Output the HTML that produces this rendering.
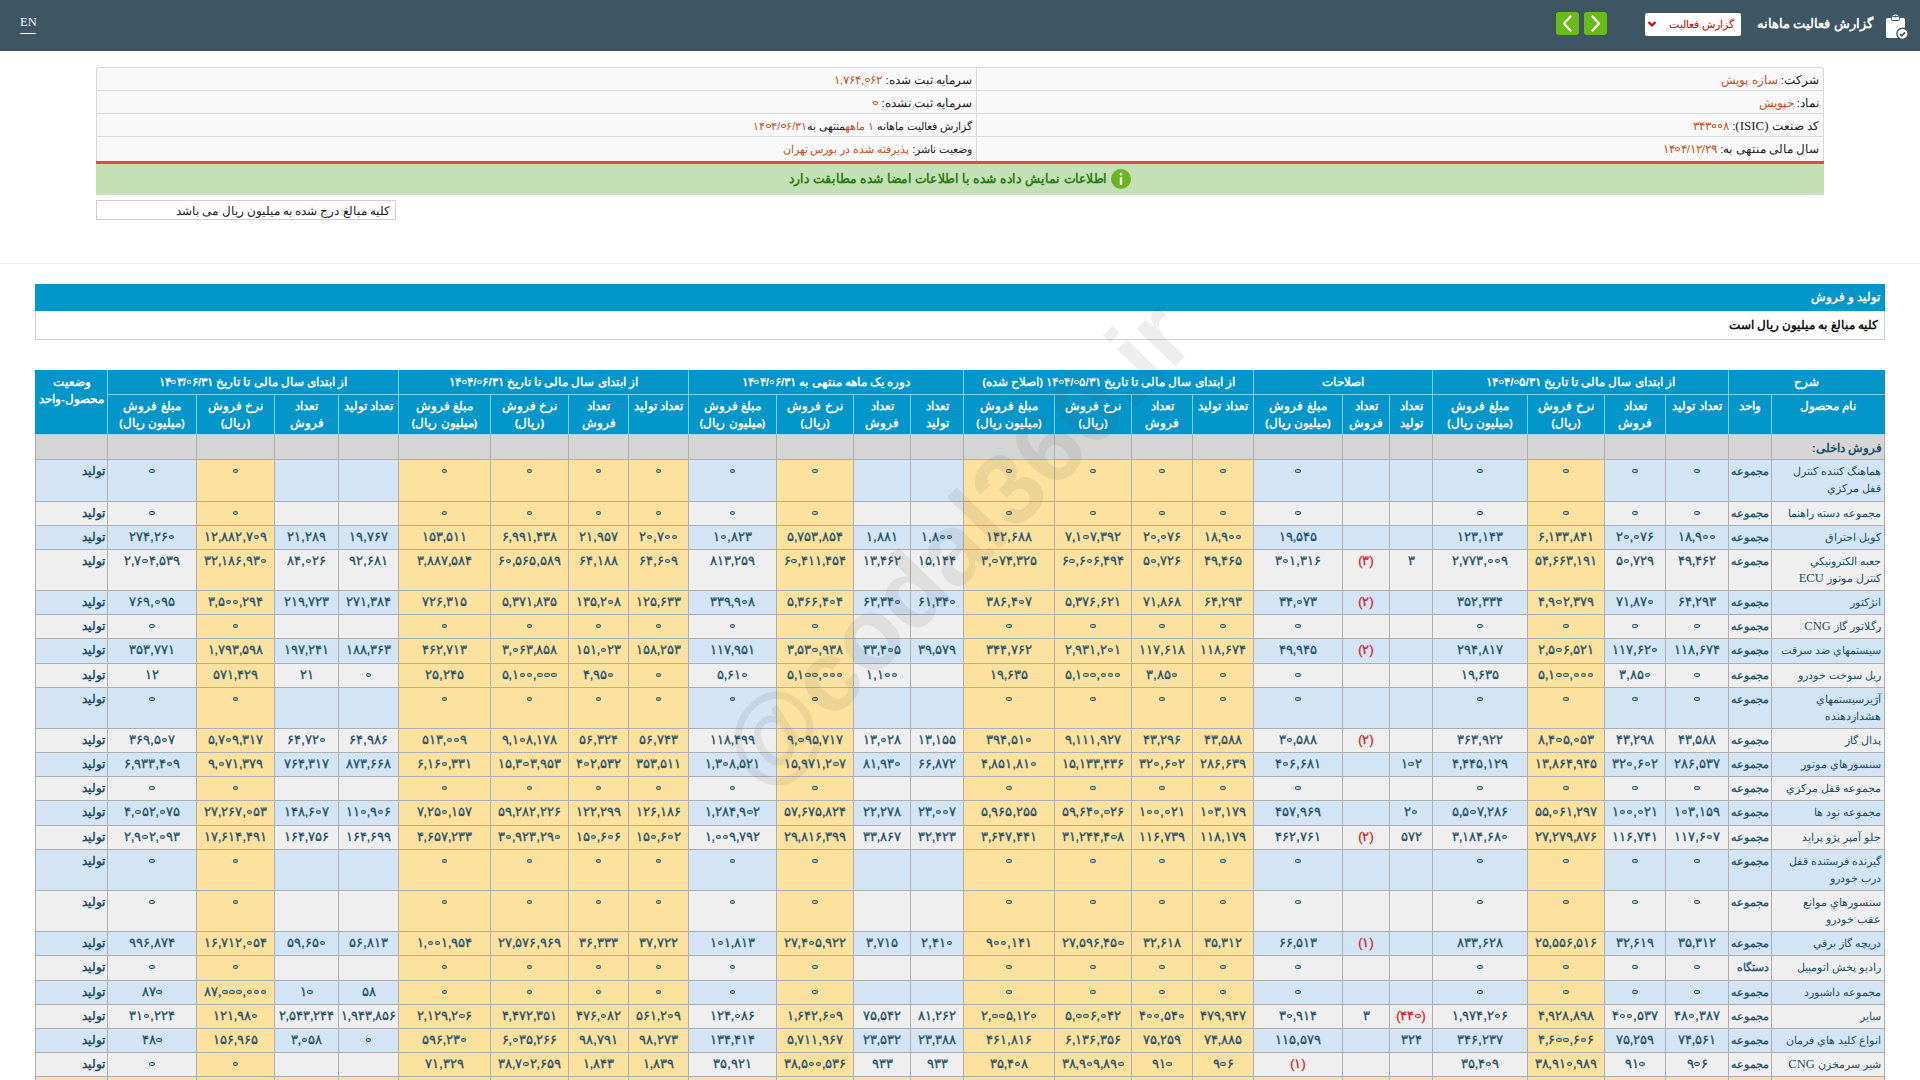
<!DOCTYPE html><html lang="fa"><head><meta charset="utf-8"><title>codal</title><style>
*{box-sizing:border-box;margin:0;padding:0}
html,body{width:1920px;height:1080px;overflow:hidden;background:#fff}
body{font-family:"Liberation Sans",sans-serif;position:relative;color:#222}
.a{position:absolute}
.nav{left:0;top:0;width:1920px;height:51px;background:#3e5563}
.ib{direction:rtl;white-space:nowrap}
.c{position:absolute;overflow:hidden;white-space:nowrap;direction:rtl;font-size:12.5px;color:#1c5068;line-height:22px}
.n{-webkit-text-stroke:0.3px currentColor}
.n{text-align:center}
.h{position:absolute;color:#fff;font-weight:bold;font-size:11.5px;text-align:center;direction:rtl;line-height:17px;overflow:hidden;white-space:nowrap}
.red{color:#d42020;font-weight:normal}
.ser{font-family:"Liberation Serif",serif;font-size:12.5px}
.L{direction:ltr;unicode-bidi:isolate}
.z{position:relative;-webkit-text-fill-color:transparent}
.z::after{content:"";position:absolute;left:50%;top:50%;width:.42em;height:.34em;margin:-.15em 0 0 -.21em;border:.13em solid currentColor;border-radius:50%;box-sizing:border-box}
</style></head><body>

<div class="a nav"></div>
<div class="a" style="left:20px;top:14px;font-family:'Liberation Serif',serif;font-size:12.5px;color:#fff;line-height:16px">EN</div>
<div class="a" style="left:20px;top:33px;width:16px;height:1px;background:#fff"></div>
<svg class="a" style="left:1884px;top:13px" width="26" height="28" viewBox="0 0 26 28">
<path d="M3.5 5H8a3.5 3.5 0 0 1 7 0h4.5a1.5 1.5 0 0 1 1.5 1.5v17a1.5 1.5 0 0 1-1.5 1.5h-16A1.5 1.5 0 0 1 2 23.5v-17A1.5 1.5 0 0 1 3.5 5z" fill="#fff"/>
<rect x="7.5" y="3.5" width="8" height="4" rx="1" fill="#fff" stroke="#3e5563" stroke-width="1"/>
<circle cx="11.5" cy="3.6" r="1" fill="#3e5563"/>
<circle cx="18.5" cy="20.8" r="5.6" fill="#fff" stroke="#3e5563" stroke-width="1.4"/>
<path d="M15.9 21l1.9 1.9 3.3-3.5" fill="none" stroke="#3e5563" stroke-width="1.6"/>
</svg>
<div class="a ib" style="right:47px;top:14px;font-size:13.3px;color:#fff;line-height:20px;font-weight:bold">گزارش فعالیت ماهانه</div>
<div class="a" style="left:1645px;top:13px;width:96px;height:23px;background:#fff;border-radius:2px"></div>
<div class="a ib" style="right:186px;top:15px;font-size:11.2px;color:#e00000;line-height:18px">گزارش فعالیت</div>
<svg class="a" style="left:1647px;top:20px" width="10" height="8" viewBox="0 0 10 8"><path d="M1.5 2l3.5 3.5L8.5 2" fill="none" stroke="#e00000" stroke-width="2.2"/></svg>
<div class="a" style="left:1556px;top:12px;width:23px;height:23px;background:#6bbb18;border-radius:3px"></div>
<svg class="a" style="left:1556px;top:12px" width="23" height="23" viewBox="0 0 23 23"><path d="M14.5 4.5l-6.5 7l6.5 7" fill="none" stroke="#fff" stroke-width="2.2" stroke-linecap="round" stroke-linejoin="round"/></svg>
<div class="a" style="left:1584px;top:12px;width:23px;height:23px;background:#6bbb18;border-radius:3px"></div>
<svg class="a" style="left:1584px;top:12px" width="23" height="23" viewBox="0 0 23 23"><path d="M8.5 4.5l6.5 7l-6.5 7" fill="none" stroke="#fff" stroke-width="2.2" stroke-linecap="round" stroke-linejoin="round"/></svg>
<div class="a" style="left:96px;top:67px;width:1728px;height:95px;background:#f9f9f9;border:1px solid #d9d9d9;border-bottom:none;border-radius:3px 3px 0 0"></div>
<div class="a" style="left:97px;top:90px;width:1726px;height:1px;background:#dcdcdc"></div>
<div class="a" style="left:97px;top:113px;width:1726px;height:1px;background:#dcdcdc"></div>
<div class="a" style="left:97px;top:136px;width:1726px;height:1px;background:#dcdcdc"></div>
<div class="a" style="left:976px;top:68px;width:1px;height:93px;background:#dcdcdc"></div>
<div class="a" style="left:96px;top:161px;width:1728px;height:3px;background:#e5474a"></div>
<div class="a" style="left:96px;top:164px;width:1728px;height:31px;background:#c3e1b5"></div>
<div class="a ib" style="right:101px;top:69px;font-size:11.5px;line-height:22px;color:#222">شرکت: <span style="color:#c4511a">سازه پویش</span></div>
<div class="a ib" style="right:101px;top:92px;font-size:11.5px;line-height:22px;color:#222">نماد: <span style="color:#c4511a">خپویش</span></div>
<div class="a ib" style="right:101px;top:115px;font-size:11.5px;line-height:22px;color:#222">کد صنعت <span style="font-family:'Liberation Serif',serif;font-size:13px">(ISIC)</span>: <span style="color:#c4511a"><span class="L">۳۴۳<span class="z">۰</span><span class="z">۰</span>۸</span></span></div>
<div class="a ib" style="right:101px;top:138px;font-size:11.5px;line-height:22px;color:#222">سال مالی منتهی به: <span style="color:#c4511a"><span class="L">۱۴<span class="z">۰</span>۴/۱۲/۲۹</span></span></div>
<div class="a ib" style="right:948px;top:69px;font-size:11.5px;line-height:22px;color:#222">سرمایه ثبت شده: <span style="color:#c4511a"><span class="L">۱,۷۶۴,<span class="z">۰</span>۶۲</span></span></div>
<div class="a ib" style="right:948px;top:92px;font-size:11.5px;line-height:22px;color:#222">سرمایه ثبت نشده: <span style="color:#c4511a"><span class="L"><span class="z">۰</span></span></span></div>
<div class="a ib" style="right:948px;top:115px;font-size:10.6px;line-height:22px;color:#222">گزارش فعالیت ماهانه <span style="color:#c4511a"><span class="L">۱</span> ماهه</span>منتهی به<span style="color:#c4511a"><span class="L">۱۴<span class="z">۰</span>۴/<span class="z">۰</span>۶/۳۱</span></span></div>
<div class="a ib" style="right:948px;top:138px;font-size:10.5px;line-height:22px;color:#222">وضعیت ناشر: <span style="color:#c4511a">پذیرفته شده در بورس تهران</span></div>
<div class="a ib" style="right:813px;top:169px;font-size:12.5px;transform:scaleX(0.95);transform-origin:100% 50%;line-height:20px;color:#2b7a12;font-weight:bold">اطلاعات نمایش داده شده با اطلاعات امضا شده مطابقت دارد</div>
<svg class="a" style="left:1111px;top:169px" width="20" height="20" viewBox="0 0 20 20"><circle cx="10" cy="10" r="10" fill="#6ab41f"/><rect x="8.8" y="8" width="2.4" height="8" fill="#fff"/><circle cx="10" cy="5" r="1.4" fill="#fff"/></svg>
<div class="a" style="left:96px;top:200px;width:300px;height:20px;border:1px solid #cfcfcf;background:#fff"></div>
<div class="a ib" style="right:1530px;top:202px;font-size:11.7px;line-height:18px;color:#222">کلیه مبالغ درج شده به میلیون ریال می باشد</div>
<div class="a" style="left:0;top:263px;width:1920px;height:1px;background:#eeeeee"></div>
<div class="a" style="left:35px;top:284px;width:1850px;height:27px;background:#0296ca"></div>
<div class="a ib" style="right:40px;top:288px;font-size:11.7px;line-height:18px;color:#fff;font-weight:bold">تولید و فروش</div>
<div class="a" style="left:35px;top:311px;width:1850px;height:29px;border:1px solid #d0d0d0;border-top:none;background:#fff"></div>
<div class="a ib" style="right:42px;top:316px;font-size:11.7px;line-height:18px;color:#111;font-weight:bold">کلیه مبالغ به میلیون ریال است</div>
<div class="a" style="left:35px;top:370px;width:1850px;height:65px;background:#0296ca"></div>
<div class="h" style="left:1729px;top:370px;width:155px;height:24px;padding-top:4px">شرح</div>
<div class="a" style="left:1728px;top:370px;width:1px;height:65px;background:#76d2f5"></div>
<div class="h" style="left:1433px;top:370px;width:295px;height:24px;padding-top:4px">از ابتدای سال مالی تا تاریخ <span class="L">۱۴<span class="z">۰</span>۴/<span class="z">۰</span>۵/۳۱</span></div>
<div class="a" style="left:1432px;top:370px;width:1px;height:65px;background:#76d2f5"></div>
<div class="h" style="left:1254px;top:370px;width:178px;height:24px;padding-top:4px">اصلاحات</div>
<div class="a" style="left:1253px;top:370px;width:1px;height:65px;background:#76d2f5"></div>
<div class="h" style="left:964px;top:370px;width:289px;height:24px;padding-top:4px">از ابتدای سال مالی تا تاریخ <span class="L">۱۴<span class="z">۰</span>۴/<span class="z">۰</span>۵/۳۱</span> (اصلاح شده)</div>
<div class="a" style="left:963px;top:370px;width:1px;height:65px;background:#76d2f5"></div>
<div class="h" style="left:689px;top:370px;width:274px;height:24px;padding-top:4px">دوره یک ماهه منتهی به <span class="L">۱۴<span class="z">۰</span>۴/<span class="z">۰</span>۶/۳۱</span></div>
<div class="a" style="left:688px;top:370px;width:1px;height:65px;background:#76d2f5"></div>
<div class="h" style="left:399px;top:370px;width:289px;height:24px;padding-top:4px">از ابتدای سال مالی تا تاریخ <span class="L">۱۴<span class="z">۰</span>۴/<span class="z">۰</span>۶/۳۱</span></div>
<div class="a" style="left:398px;top:370px;width:1px;height:65px;background:#76d2f5"></div>
<div class="h" style="left:108px;top:370px;width:290px;height:24px;padding-top:4px">از ابتدای سال مالی تا تاریخ <span class="L">۱۴<span class="z">۰</span>۳/<span class="z">۰</span>۶/۳۱</span></div>
<div class="a" style="left:107px;top:370px;width:1px;height:65px;background:#76d2f5"></div>
<div class="a" style="left:107px;top:394px;width:1778px;height:1px;background:#76d2f5"></div>
<div class="a" style="left:35px;top:434px;width:1850px;height:1px;background:#9fd9ef"></div>
<div class="h" style="left:36px;top:370px;width:71px;height:64px;padding-top:4px">وضعیت<br>محصول-واحد</div>
<div class="h" style="left:1772px;top:395px;width:112px;height:39px;padding-top:3px">نام محصول</div>
<div class="a" style="left:1771px;top:394px;width:1px;height:41px;background:#76d2f5"></div>
<div class="h" style="left:1729px;top:395px;width:42px;height:39px;padding-top:3px">واحد</div>
<div class="a" style="left:1728px;top:394px;width:1px;height:41px;background:#76d2f5"></div>
<div class="h" style="left:1666px;top:395px;width:62px;height:39px;padding-top:3px">تعداد تولید</div>
<div class="a" style="left:1665px;top:394px;width:1px;height:41px;background:#76d2f5"></div>
<div class="h" style="left:1605px;top:395px;width:60px;height:39px;padding-top:3px">تعداد<br>فروش</div>
<div class="a" style="left:1604px;top:394px;width:1px;height:41px;background:#76d2f5"></div>
<div class="h" style="left:1528px;top:395px;width:76px;height:39px;padding-top:3px">نرخ فروش<br>(ریال)</div>
<div class="a" style="left:1527px;top:394px;width:1px;height:41px;background:#76d2f5"></div>
<div class="h" style="left:1433px;top:395px;width:94px;height:39px;padding-top:3px">مبلغ فروش<br>(میلیون ریال)</div>
<div class="a" style="left:1432px;top:394px;width:1px;height:41px;background:#76d2f5"></div>
<div class="h" style="left:1390px;top:395px;width:42px;height:39px;padding-top:3px">تعداد<br>تولید</div>
<div class="a" style="left:1389px;top:394px;width:1px;height:41px;background:#76d2f5"></div>
<div class="h" style="left:1343px;top:395px;width:46px;height:39px;padding-top:3px">تعداد<br>فروش</div>
<div class="a" style="left:1342px;top:394px;width:1px;height:41px;background:#76d2f5"></div>
<div class="h" style="left:1254px;top:395px;width:88px;height:39px;padding-top:3px">مبلغ فروش<br>(میلیون ریال)</div>
<div class="a" style="left:1253px;top:394px;width:1px;height:41px;background:#76d2f5"></div>
<div class="h" style="left:1193px;top:395px;width:60px;height:39px;padding-top:3px">تعداد تولید</div>
<div class="a" style="left:1192px;top:394px;width:1px;height:41px;background:#76d2f5"></div>
<div class="h" style="left:1132px;top:395px;width:60px;height:39px;padding-top:3px">تعداد<br>فروش</div>
<div class="a" style="left:1131px;top:394px;width:1px;height:41px;background:#76d2f5"></div>
<div class="h" style="left:1055px;top:395px;width:76px;height:39px;padding-top:3px">نرخ فروش<br>(ریال)</div>
<div class="a" style="left:1054px;top:394px;width:1px;height:41px;background:#76d2f5"></div>
<div class="h" style="left:964px;top:395px;width:90px;height:39px;padding-top:3px">مبلغ فروش<br>(میلیون ریال)</div>
<div class="a" style="left:963px;top:394px;width:1px;height:41px;background:#76d2f5"></div>
<div class="h" style="left:911px;top:395px;width:52px;height:39px;padding-top:3px">تعداد<br>تولید</div>
<div class="a" style="left:910px;top:394px;width:1px;height:41px;background:#76d2f5"></div>
<div class="h" style="left:854px;top:395px;width:56px;height:39px;padding-top:3px">تعداد<br>فروش</div>
<div class="a" style="left:853px;top:394px;width:1px;height:41px;background:#76d2f5"></div>
<div class="h" style="left:777px;top:395px;width:76px;height:39px;padding-top:3px">نرخ فروش<br>(ریال)</div>
<div class="a" style="left:776px;top:394px;width:1px;height:41px;background:#76d2f5"></div>
<div class="h" style="left:689px;top:395px;width:87px;height:39px;padding-top:3px">مبلغ فروش<br>(میلیون ریال)</div>
<div class="a" style="left:688px;top:394px;width:1px;height:41px;background:#76d2f5"></div>
<div class="h" style="left:629px;top:395px;width:59px;height:39px;padding-top:3px">تعداد تولید</div>
<div class="a" style="left:628px;top:394px;width:1px;height:41px;background:#76d2f5"></div>
<div class="h" style="left:569px;top:395px;width:59px;height:39px;padding-top:3px">تعداد<br>فروش</div>
<div class="a" style="left:568px;top:394px;width:1px;height:41px;background:#76d2f5"></div>
<div class="h" style="left:491px;top:395px;width:77px;height:39px;padding-top:3px">نرخ فروش<br>(ریال)</div>
<div class="a" style="left:490px;top:394px;width:1px;height:41px;background:#76d2f5"></div>
<div class="h" style="left:399px;top:395px;width:91px;height:39px;padding-top:3px">مبلغ فروش<br>(میلیون ریال)</div>
<div class="a" style="left:398px;top:394px;width:1px;height:41px;background:#76d2f5"></div>
<div class="h" style="left:339px;top:395px;width:59px;height:39px;padding-top:3px">تعداد تولید</div>
<div class="a" style="left:338px;top:394px;width:1px;height:41px;background:#76d2f5"></div>
<div class="h" style="left:275px;top:395px;width:63px;height:39px;padding-top:3px">تعداد<br>فروش</div>
<div class="a" style="left:274px;top:394px;width:1px;height:41px;background:#76d2f5"></div>
<div class="h" style="left:197px;top:395px;width:77px;height:39px;padding-top:3px">نرخ فروش<br>(ریال)</div>
<div class="a" style="left:196px;top:394px;width:1px;height:41px;background:#76d2f5"></div>
<div class="h" style="left:108px;top:395px;width:88px;height:39px;padding-top:3px">مبلغ فروش<br>(میلیون ریال)</div>
<div class="a" style="left:107px;top:394px;width:1px;height:41px;background:#76d2f5"></div>
<div class="a" style="left:35px;top:435px;width:1850px;height:645px;background:#abafb3"></div>
<div class="a" style="left:36px;top:435px;width:71px;height:24px;background:#d5d5d5"></div>
<div class="a" style="left:108px;top:435px;width:88px;height:24px;background:#d5d5d5"></div>
<div class="a" style="left:197px;top:435px;width:77px;height:24px;background:#d5d5d5"></div>
<div class="a" style="left:275px;top:435px;width:63px;height:24px;background:#d5d5d5"></div>
<div class="a" style="left:339px;top:435px;width:59px;height:24px;background:#d5d5d5"></div>
<div class="a" style="left:399px;top:435px;width:91px;height:24px;background:#d5d5d5"></div>
<div class="a" style="left:491px;top:435px;width:77px;height:24px;background:#d5d5d5"></div>
<div class="a" style="left:569px;top:435px;width:59px;height:24px;background:#d5d5d5"></div>
<div class="a" style="left:629px;top:435px;width:59px;height:24px;background:#d5d5d5"></div>
<div class="a" style="left:689px;top:435px;width:87px;height:24px;background:#d5d5d5"></div>
<div class="a" style="left:777px;top:435px;width:76px;height:24px;background:#d5d5d5"></div>
<div class="a" style="left:854px;top:435px;width:56px;height:24px;background:#d5d5d5"></div>
<div class="a" style="left:911px;top:435px;width:52px;height:24px;background:#d5d5d5"></div>
<div class="a" style="left:964px;top:435px;width:90px;height:24px;background:#d5d5d5"></div>
<div class="a" style="left:1055px;top:435px;width:76px;height:24px;background:#d5d5d5"></div>
<div class="a" style="left:1132px;top:435px;width:60px;height:24px;background:#d5d5d5"></div>
<div class="a" style="left:1193px;top:435px;width:60px;height:24px;background:#d5d5d5"></div>
<div class="a" style="left:1254px;top:435px;width:88px;height:24px;background:#d5d5d5"></div>
<div class="a" style="left:1343px;top:435px;width:46px;height:24px;background:#d5d5d5"></div>
<div class="a" style="left:1390px;top:435px;width:42px;height:24px;background:#d5d5d5"></div>
<div class="a" style="left:1433px;top:435px;width:94px;height:24px;background:#d5d5d5"></div>
<div class="a" style="left:1528px;top:435px;width:76px;height:24px;background:#d5d5d5"></div>
<div class="a" style="left:1605px;top:435px;width:60px;height:24px;background:#d5d5d5"></div>
<div class="a" style="left:1666px;top:435px;width:62px;height:24px;background:#d5d5d5"></div>
<div class="a" style="left:1729px;top:435px;width:42px;height:24px;background:#d5d5d5"></div>
<div class="a" style="left:1772px;top:435px;width:112px;height:24px;background:#d5d5d5"></div>
<div class="a ib" style="right:38px;top:439px;font-size:11.7px;line-height:18px;color:#1c5068;font-weight:bold">فروش داخلی:</div>
<div class="c" style="left:1772px;top:460px;width:112px;height:41px;background:#d3e4f5;text-align:right;padding-right:3px;line-height:16.5px;padding-top:3px;font-size:11.3px">هماهنگ کننده کنترل<br>قفل مرکزي</div>
<div class="c" style="left:1729px;top:460px;width:42px;height:41px;background:#d3e4f5;text-align:right;padding-right:2px;font-size:11px;-webkit-text-stroke:0.3px currentColor">مجموعه</div>
<div class="c n" style="left:1666px;top:460px;width:62px;height:41px;background:#d3e4f5"><span class="L"><span class="z">۰</span></span></div>
<div class="c n" style="left:1605px;top:460px;width:60px;height:41px;background:#d3e4f5"><span class="L"><span class="z">۰</span></span></div>
<div class="c n" style="left:1528px;top:460px;width:76px;height:41px;background:#fde19e"><span class="L"><span class="z">۰</span></span></div>
<div class="c n" style="left:1433px;top:460px;width:94px;height:41px;background:#d3e4f5"><span class="L"><span class="z">۰</span></span></div>
<div class="c n" style="left:1390px;top:460px;width:42px;height:41px;background:#d3e4f5"></div>
<div class="c n" style="left:1343px;top:460px;width:46px;height:41px;background:#d3e4f5"></div>
<div class="c n" style="left:1254px;top:460px;width:88px;height:41px;background:#d3e4f5"><span class="L"><span class="z">۰</span></span></div>
<div class="c n" style="left:1193px;top:460px;width:60px;height:41px;background:#fde19e"><span class="L"><span class="z">۰</span></span></div>
<div class="c n" style="left:1132px;top:460px;width:60px;height:41px;background:#fde19e"><span class="L"><span class="z">۰</span></span></div>
<div class="c n" style="left:1055px;top:460px;width:76px;height:41px;background:#fde19e"><span class="L"><span class="z">۰</span></span></div>
<div class="c n" style="left:964px;top:460px;width:90px;height:41px;background:#fde19e"><span class="L"><span class="z">۰</span></span></div>
<div class="c n" style="left:911px;top:460px;width:52px;height:41px;background:#d3e4f5"></div>
<div class="c n" style="left:854px;top:460px;width:56px;height:41px;background:#d3e4f5"></div>
<div class="c n" style="left:777px;top:460px;width:76px;height:41px;background:#fde19e"><span class="L"><span class="z">۰</span></span></div>
<div class="c n" style="left:689px;top:460px;width:87px;height:41px;background:#d3e4f5"><span class="L"><span class="z">۰</span></span></div>
<div class="c n" style="left:629px;top:460px;width:59px;height:41px;background:#fde19e"><span class="L"><span class="z">۰</span></span></div>
<div class="c n" style="left:569px;top:460px;width:59px;height:41px;background:#fde19e"><span class="L"><span class="z">۰</span></span></div>
<div class="c n" style="left:491px;top:460px;width:77px;height:41px;background:#fde19e"><span class="L"><span class="z">۰</span></span></div>
<div class="c n" style="left:399px;top:460px;width:91px;height:41px;background:#fde19e"><span class="L"><span class="z">۰</span></span></div>
<div class="c n" style="left:339px;top:460px;width:59px;height:41px;background:#d3e4f5"></div>
<div class="c n" style="left:275px;top:460px;width:63px;height:41px;background:#d3e4f5"></div>
<div class="c n" style="left:197px;top:460px;width:77px;height:41px;background:#fde19e"><span class="L"><span class="z">۰</span></span></div>
<div class="c n" style="left:108px;top:460px;width:88px;height:41px;background:#d3e4f5"><span class="L"><span class="z">۰</span></span></div>
<div class="c" style="left:36px;top:460px;width:71px;height:41px;background:#d3e4f5;text-align:right;padding-right:2px;font-size:11.5px;font-weight:bold">تولید</div>
<div class="c" style="left:1772px;top:502px;width:112px;height:23px;background:#efefef;text-align:right;padding-right:3px;line-height:16.5px;padding-top:3px;font-size:11.3px">مجموعه دسته راهنما</div>
<div class="c" style="left:1729px;top:502px;width:42px;height:23px;background:#efefef;text-align:right;padding-right:2px;font-size:11px;-webkit-text-stroke:0.3px currentColor">مجموعه</div>
<div class="c n" style="left:1666px;top:502px;width:62px;height:23px;background:#efefef"><span class="L"><span class="z">۰</span></span></div>
<div class="c n" style="left:1605px;top:502px;width:60px;height:23px;background:#efefef"><span class="L"><span class="z">۰</span></span></div>
<div class="c n" style="left:1528px;top:502px;width:76px;height:23px;background:#fde19e"><span class="L"><span class="z">۰</span></span></div>
<div class="c n" style="left:1433px;top:502px;width:94px;height:23px;background:#efefef"><span class="L"><span class="z">۰</span></span></div>
<div class="c n" style="left:1390px;top:502px;width:42px;height:23px;background:#efefef"></div>
<div class="c n" style="left:1343px;top:502px;width:46px;height:23px;background:#efefef"></div>
<div class="c n" style="left:1254px;top:502px;width:88px;height:23px;background:#efefef"><span class="L"><span class="z">۰</span></span></div>
<div class="c n" style="left:1193px;top:502px;width:60px;height:23px;background:#fde19e"><span class="L"><span class="z">۰</span></span></div>
<div class="c n" style="left:1132px;top:502px;width:60px;height:23px;background:#fde19e"><span class="L"><span class="z">۰</span></span></div>
<div class="c n" style="left:1055px;top:502px;width:76px;height:23px;background:#fde19e"><span class="L"><span class="z">۰</span></span></div>
<div class="c n" style="left:964px;top:502px;width:90px;height:23px;background:#fde19e"><span class="L"><span class="z">۰</span></span></div>
<div class="c n" style="left:911px;top:502px;width:52px;height:23px;background:#efefef"></div>
<div class="c n" style="left:854px;top:502px;width:56px;height:23px;background:#efefef"></div>
<div class="c n" style="left:777px;top:502px;width:76px;height:23px;background:#fde19e"><span class="L"><span class="z">۰</span></span></div>
<div class="c n" style="left:689px;top:502px;width:87px;height:23px;background:#efefef"><span class="L"><span class="z">۰</span></span></div>
<div class="c n" style="left:629px;top:502px;width:59px;height:23px;background:#fde19e"><span class="L"><span class="z">۰</span></span></div>
<div class="c n" style="left:569px;top:502px;width:59px;height:23px;background:#fde19e"><span class="L"><span class="z">۰</span></span></div>
<div class="c n" style="left:491px;top:502px;width:77px;height:23px;background:#fde19e"><span class="L"><span class="z">۰</span></span></div>
<div class="c n" style="left:399px;top:502px;width:91px;height:23px;background:#fde19e"><span class="L"><span class="z">۰</span></span></div>
<div class="c n" style="left:339px;top:502px;width:59px;height:23px;background:#efefef"></div>
<div class="c n" style="left:275px;top:502px;width:63px;height:23px;background:#efefef"></div>
<div class="c n" style="left:197px;top:502px;width:77px;height:23px;background:#fde19e"><span class="L"><span class="z">۰</span></span></div>
<div class="c n" style="left:108px;top:502px;width:88px;height:23px;background:#efefef"><span class="L"><span class="z">۰</span></span></div>
<div class="c" style="left:36px;top:502px;width:71px;height:23px;background:#efefef;text-align:right;padding-right:2px;font-size:11.5px;font-weight:bold">تولید</div>
<div class="c" style="left:1772px;top:526px;width:112px;height:23px;background:#d3e4f5;text-align:right;padding-right:3px;line-height:16.5px;padding-top:3px;font-size:11.3px">کويل احتراق</div>
<div class="c" style="left:1729px;top:526px;width:42px;height:23px;background:#d3e4f5;text-align:right;padding-right:2px;font-size:11px;-webkit-text-stroke:0.3px currentColor">مجموعه</div>
<div class="c n" style="left:1666px;top:526px;width:62px;height:23px;background:#d3e4f5"><span class="L">۱۸,۹<span class="z">۰</span><span class="z">۰</span></span></div>
<div class="c n" style="left:1605px;top:526px;width:60px;height:23px;background:#d3e4f5"><span class="L">۲<span class="z">۰</span>,<span class="z">۰</span>۷۶</span></div>
<div class="c n" style="left:1528px;top:526px;width:76px;height:23px;background:#fde19e"><span class="L">۶,۱۳۳,۸۴۱</span></div>
<div class="c n" style="left:1433px;top:526px;width:94px;height:23px;background:#d3e4f5"><span class="L">۱۲۳,۱۴۳</span></div>
<div class="c n" style="left:1390px;top:526px;width:42px;height:23px;background:#d3e4f5"></div>
<div class="c n" style="left:1343px;top:526px;width:46px;height:23px;background:#d3e4f5"></div>
<div class="c n" style="left:1254px;top:526px;width:88px;height:23px;background:#d3e4f5"><span class="L">۱۹,۵۴۵</span></div>
<div class="c n" style="left:1193px;top:526px;width:60px;height:23px;background:#fde19e"><span class="L">۱۸,۹<span class="z">۰</span><span class="z">۰</span></span></div>
<div class="c n" style="left:1132px;top:526px;width:60px;height:23px;background:#fde19e"><span class="L">۲<span class="z">۰</span>,<span class="z">۰</span>۷۶</span></div>
<div class="c n" style="left:1055px;top:526px;width:76px;height:23px;background:#fde19e"><span class="L">۷,۱<span class="z">۰</span>۷,۳۹۲</span></div>
<div class="c n" style="left:964px;top:526px;width:90px;height:23px;background:#fde19e"><span class="L">۱۴۲,۶۸۸</span></div>
<div class="c n" style="left:911px;top:526px;width:52px;height:23px;background:#d3e4f5"><span class="L">۱,۸<span class="z">۰</span><span class="z">۰</span></span></div>
<div class="c n" style="left:854px;top:526px;width:56px;height:23px;background:#d3e4f5"><span class="L">۱,۸۸۱</span></div>
<div class="c n" style="left:777px;top:526px;width:76px;height:23px;background:#fde19e"><span class="L">۵,۷۵۳,۸۵۴</span></div>
<div class="c n" style="left:689px;top:526px;width:87px;height:23px;background:#d3e4f5"><span class="L">۱<span class="z">۰</span>,۸۲۳</span></div>
<div class="c n" style="left:629px;top:526px;width:59px;height:23px;background:#fde19e"><span class="L">۲<span class="z">۰</span>,۷<span class="z">۰</span><span class="z">۰</span></span></div>
<div class="c n" style="left:569px;top:526px;width:59px;height:23px;background:#fde19e"><span class="L">۲۱,۹۵۷</span></div>
<div class="c n" style="left:491px;top:526px;width:77px;height:23px;background:#fde19e"><span class="L">۶,۹۹۱,۴۳۸</span></div>
<div class="c n" style="left:399px;top:526px;width:91px;height:23px;background:#fde19e"><span class="L">۱۵۳,۵۱۱</span></div>
<div class="c n" style="left:339px;top:526px;width:59px;height:23px;background:#d3e4f5"><span class="L">۱۹,۷۶۷</span></div>
<div class="c n" style="left:275px;top:526px;width:63px;height:23px;background:#d3e4f5"><span class="L">۲۱,۲۸۹</span></div>
<div class="c n" style="left:197px;top:526px;width:77px;height:23px;background:#fde19e"><span class="L">۱۲,۸۸۲,۷<span class="z">۰</span>۹</span></div>
<div class="c n" style="left:108px;top:526px;width:88px;height:23px;background:#d3e4f5"><span class="L">۲۷۴,۲۶<span class="z">۰</span></span></div>
<div class="c" style="left:36px;top:526px;width:71px;height:23px;background:#d3e4f5;text-align:right;padding-right:2px;font-size:11.5px;font-weight:bold">تولید</div>
<div class="c" style="left:1772px;top:550px;width:112px;height:40px;background:#efefef;text-align:right;padding-right:3px;line-height:16.5px;padding-top:3px;font-size:11.3px">جعبه الکترونيکي<br>کنترل موتور <span class="ser">ECU</span></div>
<div class="c" style="left:1729px;top:550px;width:42px;height:40px;background:#efefef;text-align:right;padding-right:2px;font-size:11px;-webkit-text-stroke:0.3px currentColor">مجموعه</div>
<div class="c n" style="left:1666px;top:550px;width:62px;height:40px;background:#efefef"><span class="L">۴۹,۴۶۲</span></div>
<div class="c n" style="left:1605px;top:550px;width:60px;height:40px;background:#efefef"><span class="L">۵<span class="z">۰</span>,۷۲۹</span></div>
<div class="c n" style="left:1528px;top:550px;width:76px;height:40px;background:#fde19e"><span class="L">۵۴,۶۶۳,۱۹۱</span></div>
<div class="c n" style="left:1433px;top:550px;width:94px;height:40px;background:#efefef"><span class="L">۲,۷۷۳,<span class="z">۰</span><span class="z">۰</span>۹</span></div>
<div class="c n" style="left:1390px;top:550px;width:42px;height:40px;background:#efefef"><span class="L">۳</span></div>
<div class="c n" style="left:1343px;top:550px;width:46px;height:40px;background:#efefef"><span class="red"><span class="L">(۳)</span></span></div>
<div class="c n" style="left:1254px;top:550px;width:88px;height:40px;background:#efefef"><span class="L">۳<span class="z">۰</span>۱,۳۱۶</span></div>
<div class="c n" style="left:1193px;top:550px;width:60px;height:40px;background:#fde19e"><span class="L">۴۹,۴۶۵</span></div>
<div class="c n" style="left:1132px;top:550px;width:60px;height:40px;background:#fde19e"><span class="L">۵<span class="z">۰</span>,۷۲۶</span></div>
<div class="c n" style="left:1055px;top:550px;width:76px;height:40px;background:#fde19e"><span class="L">۶<span class="z">۰</span>,۶<span class="z">۰</span>۶,۴۹۴</span></div>
<div class="c n" style="left:964px;top:550px;width:90px;height:40px;background:#fde19e"><span class="L">۳,<span class="z">۰</span>۷۴,۳۲۵</span></div>
<div class="c n" style="left:911px;top:550px;width:52px;height:40px;background:#efefef"><span class="L">۱۵,۱۴۴</span></div>
<div class="c n" style="left:854px;top:550px;width:56px;height:40px;background:#efefef"><span class="L">۱۳,۴۶۲</span></div>
<div class="c n" style="left:777px;top:550px;width:76px;height:40px;background:#fde19e"><span class="L">۶<span class="z">۰</span>,۴۱۱,۴۵۴</span></div>
<div class="c n" style="left:689px;top:550px;width:87px;height:40px;background:#efefef"><span class="L">۸۱۳,۲۵۹</span></div>
<div class="c n" style="left:629px;top:550px;width:59px;height:40px;background:#fde19e"><span class="L">۶۴,۶<span class="z">۰</span>۹</span></div>
<div class="c n" style="left:569px;top:550px;width:59px;height:40px;background:#fde19e"><span class="L">۶۴,۱۸۸</span></div>
<div class="c n" style="left:491px;top:550px;width:77px;height:40px;background:#fde19e"><span class="L">۶<span class="z">۰</span>,۵۶۵,۵۸۹</span></div>
<div class="c n" style="left:399px;top:550px;width:91px;height:40px;background:#fde19e"><span class="L">۳,۸۸۷,۵۸۴</span></div>
<div class="c n" style="left:339px;top:550px;width:59px;height:40px;background:#efefef"><span class="L">۹۲,۶۸۱</span></div>
<div class="c n" style="left:275px;top:550px;width:63px;height:40px;background:#efefef"><span class="L">۸۴,<span class="z">۰</span>۲۶</span></div>
<div class="c n" style="left:197px;top:550px;width:77px;height:40px;background:#fde19e"><span class="L">۳۲,۱۸۶,۹۳<span class="z">۰</span></span></div>
<div class="c n" style="left:108px;top:550px;width:88px;height:40px;background:#efefef"><span class="L">۲,۷<span class="z">۰</span>۴,۵۳۹</span></div>
<div class="c" style="left:36px;top:550px;width:71px;height:40px;background:#efefef;text-align:right;padding-right:2px;font-size:11.5px;font-weight:bold">تولید</div>
<div class="c" style="left:1772px;top:591px;width:112px;height:23px;background:#d3e4f5;text-align:right;padding-right:3px;line-height:16.5px;padding-top:3px;font-size:11.3px">انژکتور</div>
<div class="c" style="left:1729px;top:591px;width:42px;height:23px;background:#d3e4f5;text-align:right;padding-right:2px;font-size:11px;-webkit-text-stroke:0.3px currentColor">مجموعه</div>
<div class="c n" style="left:1666px;top:591px;width:62px;height:23px;background:#d3e4f5"><span class="L">۶۴,۲۹۳</span></div>
<div class="c n" style="left:1605px;top:591px;width:60px;height:23px;background:#d3e4f5"><span class="L">۷۱,۸۷<span class="z">۰</span></span></div>
<div class="c n" style="left:1528px;top:591px;width:76px;height:23px;background:#fde19e"><span class="L">۴,۹<span class="z">۰</span>۲,۳۷۹</span></div>
<div class="c n" style="left:1433px;top:591px;width:94px;height:23px;background:#d3e4f5"><span class="L">۳۵۲,۳۳۴</span></div>
<div class="c n" style="left:1390px;top:591px;width:42px;height:23px;background:#d3e4f5"></div>
<div class="c n" style="left:1343px;top:591px;width:46px;height:23px;background:#d3e4f5"><span class="red"><span class="L">(۲)</span></span></div>
<div class="c n" style="left:1254px;top:591px;width:88px;height:23px;background:#d3e4f5"><span class="L">۳۴,<span class="z">۰</span>۷۳</span></div>
<div class="c n" style="left:1193px;top:591px;width:60px;height:23px;background:#fde19e"><span class="L">۶۴,۲۹۳</span></div>
<div class="c n" style="left:1132px;top:591px;width:60px;height:23px;background:#fde19e"><span class="L">۷۱,۸۶۸</span></div>
<div class="c n" style="left:1055px;top:591px;width:76px;height:23px;background:#fde19e"><span class="L">۵,۳۷۶,۶۲۱</span></div>
<div class="c n" style="left:964px;top:591px;width:90px;height:23px;background:#fde19e"><span class="L">۳۸۶,۴<span class="z">۰</span>۷</span></div>
<div class="c n" style="left:911px;top:591px;width:52px;height:23px;background:#d3e4f5"><span class="L">۶۱,۳۴<span class="z">۰</span></span></div>
<div class="c n" style="left:854px;top:591px;width:56px;height:23px;background:#d3e4f5"><span class="L">۶۳,۳۴<span class="z">۰</span></span></div>
<div class="c n" style="left:777px;top:591px;width:76px;height:23px;background:#fde19e"><span class="L">۵,۳۶۶,۴<span class="z">۰</span>۴</span></div>
<div class="c n" style="left:689px;top:591px;width:87px;height:23px;background:#d3e4f5"><span class="L">۳۳۹,۹<span class="z">۰</span>۸</span></div>
<div class="c n" style="left:629px;top:591px;width:59px;height:23px;background:#fde19e"><span class="L">۱۲۵,۶۳۳</span></div>
<div class="c n" style="left:569px;top:591px;width:59px;height:23px;background:#fde19e"><span class="L">۱۳۵,۲<span class="z">۰</span>۸</span></div>
<div class="c n" style="left:491px;top:591px;width:77px;height:23px;background:#fde19e"><span class="L">۵,۳۷۱,۸۳۵</span></div>
<div class="c n" style="left:399px;top:591px;width:91px;height:23px;background:#fde19e"><span class="L">۷۲۶,۳۱۵</span></div>
<div class="c n" style="left:339px;top:591px;width:59px;height:23px;background:#d3e4f5"><span class="L">۲۷۱,۳۸۴</span></div>
<div class="c n" style="left:275px;top:591px;width:63px;height:23px;background:#d3e4f5"><span class="L">۲۱۹,۷۲۳</span></div>
<div class="c n" style="left:197px;top:591px;width:77px;height:23px;background:#fde19e"><span class="L">۳,۵<span class="z">۰</span><span class="z">۰</span>,۲۹۴</span></div>
<div class="c n" style="left:108px;top:591px;width:88px;height:23px;background:#d3e4f5"><span class="L">۷۶۹,<span class="z">۰</span>۹۵</span></div>
<div class="c" style="left:36px;top:591px;width:71px;height:23px;background:#d3e4f5;text-align:right;padding-right:2px;font-size:11.5px;font-weight:bold">تولید</div>
<div class="c" style="left:1772px;top:615px;width:112px;height:23px;background:#efefef;text-align:right;padding-right:3px;line-height:16.5px;padding-top:3px;font-size:11.3px">رگلاتور گاز <span class="ser">CNG</span></div>
<div class="c" style="left:1729px;top:615px;width:42px;height:23px;background:#efefef;text-align:right;padding-right:2px;font-size:11px;-webkit-text-stroke:0.3px currentColor">مجموعه</div>
<div class="c n" style="left:1666px;top:615px;width:62px;height:23px;background:#efefef"><span class="L"><span class="z">۰</span></span></div>
<div class="c n" style="left:1605px;top:615px;width:60px;height:23px;background:#efefef"><span class="L"><span class="z">۰</span></span></div>
<div class="c n" style="left:1528px;top:615px;width:76px;height:23px;background:#fde19e"><span class="L"><span class="z">۰</span></span></div>
<div class="c n" style="left:1433px;top:615px;width:94px;height:23px;background:#efefef"><span class="L"><span class="z">۰</span></span></div>
<div class="c n" style="left:1390px;top:615px;width:42px;height:23px;background:#efefef"></div>
<div class="c n" style="left:1343px;top:615px;width:46px;height:23px;background:#efefef"></div>
<div class="c n" style="left:1254px;top:615px;width:88px;height:23px;background:#efefef"><span class="L"><span class="z">۰</span></span></div>
<div class="c n" style="left:1193px;top:615px;width:60px;height:23px;background:#fde19e"><span class="L"><span class="z">۰</span></span></div>
<div class="c n" style="left:1132px;top:615px;width:60px;height:23px;background:#fde19e"><span class="L"><span class="z">۰</span></span></div>
<div class="c n" style="left:1055px;top:615px;width:76px;height:23px;background:#fde19e"><span class="L"><span class="z">۰</span></span></div>
<div class="c n" style="left:964px;top:615px;width:90px;height:23px;background:#fde19e"><span class="L"><span class="z">۰</span></span></div>
<div class="c n" style="left:911px;top:615px;width:52px;height:23px;background:#efefef"></div>
<div class="c n" style="left:854px;top:615px;width:56px;height:23px;background:#efefef"></div>
<div class="c n" style="left:777px;top:615px;width:76px;height:23px;background:#fde19e"><span class="L"><span class="z">۰</span></span></div>
<div class="c n" style="left:689px;top:615px;width:87px;height:23px;background:#efefef"><span class="L"><span class="z">۰</span></span></div>
<div class="c n" style="left:629px;top:615px;width:59px;height:23px;background:#fde19e"><span class="L"><span class="z">۰</span></span></div>
<div class="c n" style="left:569px;top:615px;width:59px;height:23px;background:#fde19e"><span class="L"><span class="z">۰</span></span></div>
<div class="c n" style="left:491px;top:615px;width:77px;height:23px;background:#fde19e"><span class="L"><span class="z">۰</span></span></div>
<div class="c n" style="left:399px;top:615px;width:91px;height:23px;background:#fde19e"><span class="L"><span class="z">۰</span></span></div>
<div class="c n" style="left:339px;top:615px;width:59px;height:23px;background:#efefef"></div>
<div class="c n" style="left:275px;top:615px;width:63px;height:23px;background:#efefef"></div>
<div class="c n" style="left:197px;top:615px;width:77px;height:23px;background:#fde19e"><span class="L"><span class="z">۰</span></span></div>
<div class="c n" style="left:108px;top:615px;width:88px;height:23px;background:#efefef"><span class="L"><span class="z">۰</span></span></div>
<div class="c" style="left:36px;top:615px;width:71px;height:23px;background:#efefef;text-align:right;padding-right:2px;font-size:11.5px;font-weight:bold">تولید</div>
<div class="c" style="left:1772px;top:639px;width:112px;height:24px;background:#d3e4f5;text-align:right;padding-right:3px;line-height:16.5px;padding-top:3px;font-size:11.3px">سيستمهاي ضد سرقت</div>
<div class="c" style="left:1729px;top:639px;width:42px;height:24px;background:#d3e4f5;text-align:right;padding-right:2px;font-size:11px;-webkit-text-stroke:0.3px currentColor">مجموعه</div>
<div class="c n" style="left:1666px;top:639px;width:62px;height:24px;background:#d3e4f5"><span class="L">۱۱۸,۶۷۴</span></div>
<div class="c n" style="left:1605px;top:639px;width:60px;height:24px;background:#d3e4f5"><span class="L">۱۱۷,۶۲<span class="z">۰</span></span></div>
<div class="c n" style="left:1528px;top:639px;width:76px;height:24px;background:#fde19e"><span class="L">۲,۵<span class="z">۰</span>۶,۵۲۱</span></div>
<div class="c n" style="left:1433px;top:639px;width:94px;height:24px;background:#d3e4f5"><span class="L">۲۹۴,۸۱۷</span></div>
<div class="c n" style="left:1390px;top:639px;width:42px;height:24px;background:#d3e4f5"></div>
<div class="c n" style="left:1343px;top:639px;width:46px;height:24px;background:#d3e4f5"><span class="red"><span class="L">(۲)</span></span></div>
<div class="c n" style="left:1254px;top:639px;width:88px;height:24px;background:#d3e4f5"><span class="L">۴۹,۹۴۵</span></div>
<div class="c n" style="left:1193px;top:639px;width:60px;height:24px;background:#fde19e"><span class="L">۱۱۸,۶۷۴</span></div>
<div class="c n" style="left:1132px;top:639px;width:60px;height:24px;background:#fde19e"><span class="L">۱۱۷,۶۱۸</span></div>
<div class="c n" style="left:1055px;top:639px;width:76px;height:24px;background:#fde19e"><span class="L">۲,۹۳۱,۲<span class="z">۰</span>۱</span></div>
<div class="c n" style="left:964px;top:639px;width:90px;height:24px;background:#fde19e"><span class="L">۳۴۴,۷۶۲</span></div>
<div class="c n" style="left:911px;top:639px;width:52px;height:24px;background:#d3e4f5"><span class="L">۳۹,۵۷۹</span></div>
<div class="c n" style="left:854px;top:639px;width:56px;height:24px;background:#d3e4f5"><span class="L">۳۳,۴<span class="z">۰</span>۵</span></div>
<div class="c n" style="left:777px;top:639px;width:76px;height:24px;background:#fde19e"><span class="L">۳,۵۳<span class="z">۰</span>,۹۳۸</span></div>
<div class="c n" style="left:689px;top:639px;width:87px;height:24px;background:#d3e4f5"><span class="L">۱۱۷,۹۵۱</span></div>
<div class="c n" style="left:629px;top:639px;width:59px;height:24px;background:#fde19e"><span class="L">۱۵۸,۲۵۳</span></div>
<div class="c n" style="left:569px;top:639px;width:59px;height:24px;background:#fde19e"><span class="L">۱۵۱,<span class="z">۰</span>۲۳</span></div>
<div class="c n" style="left:491px;top:639px;width:77px;height:24px;background:#fde19e"><span class="L">۳,<span class="z">۰</span>۶۳,۸۵۸</span></div>
<div class="c n" style="left:399px;top:639px;width:91px;height:24px;background:#fde19e"><span class="L">۴۶۲,۷۱۳</span></div>
<div class="c n" style="left:339px;top:639px;width:59px;height:24px;background:#d3e4f5"><span class="L">۱۸۸,۳۶۳</span></div>
<div class="c n" style="left:275px;top:639px;width:63px;height:24px;background:#d3e4f5"><span class="L">۱۹۷,۲۴۱</span></div>
<div class="c n" style="left:197px;top:639px;width:77px;height:24px;background:#fde19e"><span class="L">۱,۷۹۳,۵۹۸</span></div>
<div class="c n" style="left:108px;top:639px;width:88px;height:24px;background:#d3e4f5"><span class="L">۳۵۳,۷۷۱</span></div>
<div class="c" style="left:36px;top:639px;width:71px;height:24px;background:#d3e4f5;text-align:right;padding-right:2px;font-size:11.5px;font-weight:bold">تولید</div>
<div class="c" style="left:1772px;top:664px;width:112px;height:23px;background:#efefef;text-align:right;padding-right:3px;line-height:16.5px;padding-top:3px;font-size:11.3px">ريل سوخت خودرو</div>
<div class="c" style="left:1729px;top:664px;width:42px;height:23px;background:#efefef;text-align:right;padding-right:2px;font-size:11px;-webkit-text-stroke:0.3px currentColor">مجموعه</div>
<div class="c n" style="left:1666px;top:664px;width:62px;height:23px;background:#efefef"><span class="L"><span class="z">۰</span></span></div>
<div class="c n" style="left:1605px;top:664px;width:60px;height:23px;background:#efefef"><span class="L">۳,۸۵<span class="z">۰</span></span></div>
<div class="c n" style="left:1528px;top:664px;width:76px;height:23px;background:#fde19e"><span class="L">۵,۱<span class="z">۰</span><span class="z">۰</span>,<span class="z">۰</span><span class="z">۰</span><span class="z">۰</span></span></div>
<div class="c n" style="left:1433px;top:664px;width:94px;height:23px;background:#efefef"><span class="L">۱۹,۶۳۵</span></div>
<div class="c n" style="left:1390px;top:664px;width:42px;height:23px;background:#efefef"></div>
<div class="c n" style="left:1343px;top:664px;width:46px;height:23px;background:#efefef"></div>
<div class="c n" style="left:1254px;top:664px;width:88px;height:23px;background:#efefef"><span class="L"><span class="z">۰</span></span></div>
<div class="c n" style="left:1193px;top:664px;width:60px;height:23px;background:#fde19e"><span class="L"><span class="z">۰</span></span></div>
<div class="c n" style="left:1132px;top:664px;width:60px;height:23px;background:#fde19e"><span class="L">۳,۸۵<span class="z">۰</span></span></div>
<div class="c n" style="left:1055px;top:664px;width:76px;height:23px;background:#fde19e"><span class="L">۵,۱<span class="z">۰</span><span class="z">۰</span>,<span class="z">۰</span><span class="z">۰</span><span class="z">۰</span></span></div>
<div class="c n" style="left:964px;top:664px;width:90px;height:23px;background:#fde19e"><span class="L">۱۹,۶۳۵</span></div>
<div class="c n" style="left:911px;top:664px;width:52px;height:23px;background:#efefef"></div>
<div class="c n" style="left:854px;top:664px;width:56px;height:23px;background:#efefef"><span class="L">۱,۱<span class="z">۰</span><span class="z">۰</span></span></div>
<div class="c n" style="left:777px;top:664px;width:76px;height:23px;background:#fde19e"><span class="L">۵,۱<span class="z">۰</span><span class="z">۰</span>,<span class="z">۰</span><span class="z">۰</span><span class="z">۰</span></span></div>
<div class="c n" style="left:689px;top:664px;width:87px;height:23px;background:#efefef"><span class="L">۵,۶۱<span class="z">۰</span></span></div>
<div class="c n" style="left:629px;top:664px;width:59px;height:23px;background:#fde19e"><span class="L"><span class="z">۰</span></span></div>
<div class="c n" style="left:569px;top:664px;width:59px;height:23px;background:#fde19e"><span class="L">۴,۹۵<span class="z">۰</span></span></div>
<div class="c n" style="left:491px;top:664px;width:77px;height:23px;background:#fde19e"><span class="L">۵,۱<span class="z">۰</span><span class="z">۰</span>,<span class="z">۰</span><span class="z">۰</span><span class="z">۰</span></span></div>
<div class="c n" style="left:399px;top:664px;width:91px;height:23px;background:#fde19e"><span class="L">۲۵,۲۴۵</span></div>
<div class="c n" style="left:339px;top:664px;width:59px;height:23px;background:#efefef"><span class="L"><span class="z">۰</span></span></div>
<div class="c n" style="left:275px;top:664px;width:63px;height:23px;background:#efefef"><span class="L">۲۱</span></div>
<div class="c n" style="left:197px;top:664px;width:77px;height:23px;background:#fde19e"><span class="L">۵۷۱,۴۲۹</span></div>
<div class="c n" style="left:108px;top:664px;width:88px;height:23px;background:#efefef"><span class="L">۱۲</span></div>
<div class="c" style="left:36px;top:664px;width:71px;height:23px;background:#efefef;text-align:right;padding-right:2px;font-size:11.5px;font-weight:bold">تولید</div>
<div class="c" style="left:1772px;top:688px;width:112px;height:40px;background:#d3e4f5;text-align:right;padding-right:3px;line-height:16.5px;padding-top:3px;font-size:11.3px">آژيرسيستمهاي<br>هشداردهنده</div>
<div class="c" style="left:1729px;top:688px;width:42px;height:40px;background:#d3e4f5;text-align:right;padding-right:2px;font-size:11px;-webkit-text-stroke:0.3px currentColor">مجموعه</div>
<div class="c n" style="left:1666px;top:688px;width:62px;height:40px;background:#d3e4f5"><span class="L"><span class="z">۰</span></span></div>
<div class="c n" style="left:1605px;top:688px;width:60px;height:40px;background:#d3e4f5"><span class="L"><span class="z">۰</span></span></div>
<div class="c n" style="left:1528px;top:688px;width:76px;height:40px;background:#fde19e"><span class="L"><span class="z">۰</span></span></div>
<div class="c n" style="left:1433px;top:688px;width:94px;height:40px;background:#d3e4f5"><span class="L"><span class="z">۰</span></span></div>
<div class="c n" style="left:1390px;top:688px;width:42px;height:40px;background:#d3e4f5"></div>
<div class="c n" style="left:1343px;top:688px;width:46px;height:40px;background:#d3e4f5"></div>
<div class="c n" style="left:1254px;top:688px;width:88px;height:40px;background:#d3e4f5"><span class="L"><span class="z">۰</span></span></div>
<div class="c n" style="left:1193px;top:688px;width:60px;height:40px;background:#fde19e"><span class="L"><span class="z">۰</span></span></div>
<div class="c n" style="left:1132px;top:688px;width:60px;height:40px;background:#fde19e"><span class="L"><span class="z">۰</span></span></div>
<div class="c n" style="left:1055px;top:688px;width:76px;height:40px;background:#fde19e"><span class="L"><span class="z">۰</span></span></div>
<div class="c n" style="left:964px;top:688px;width:90px;height:40px;background:#fde19e"><span class="L"><span class="z">۰</span></span></div>
<div class="c n" style="left:911px;top:688px;width:52px;height:40px;background:#d3e4f5"></div>
<div class="c n" style="left:854px;top:688px;width:56px;height:40px;background:#d3e4f5"></div>
<div class="c n" style="left:777px;top:688px;width:76px;height:40px;background:#fde19e"><span class="L"><span class="z">۰</span></span></div>
<div class="c n" style="left:689px;top:688px;width:87px;height:40px;background:#d3e4f5"><span class="L"><span class="z">۰</span></span></div>
<div class="c n" style="left:629px;top:688px;width:59px;height:40px;background:#fde19e"><span class="L"><span class="z">۰</span></span></div>
<div class="c n" style="left:569px;top:688px;width:59px;height:40px;background:#fde19e"><span class="L"><span class="z">۰</span></span></div>
<div class="c n" style="left:491px;top:688px;width:77px;height:40px;background:#fde19e"><span class="L"><span class="z">۰</span></span></div>
<div class="c n" style="left:399px;top:688px;width:91px;height:40px;background:#fde19e"><span class="L"><span class="z">۰</span></span></div>
<div class="c n" style="left:339px;top:688px;width:59px;height:40px;background:#d3e4f5"></div>
<div class="c n" style="left:275px;top:688px;width:63px;height:40px;background:#d3e4f5"></div>
<div class="c n" style="left:197px;top:688px;width:77px;height:40px;background:#fde19e"><span class="L"><span class="z">۰</span></span></div>
<div class="c n" style="left:108px;top:688px;width:88px;height:40px;background:#d3e4f5"><span class="L"><span class="z">۰</span></span></div>
<div class="c" style="left:36px;top:688px;width:71px;height:40px;background:#d3e4f5;text-align:right;padding-right:2px;font-size:11.5px;font-weight:bold">تولید</div>
<div class="c" style="left:1772px;top:729px;width:112px;height:23px;background:#efefef;text-align:right;padding-right:3px;line-height:16.5px;padding-top:3px;font-size:11.3px">پدال گاز</div>
<div class="c" style="left:1729px;top:729px;width:42px;height:23px;background:#efefef;text-align:right;padding-right:2px;font-size:11px;-webkit-text-stroke:0.3px currentColor">مجموعه</div>
<div class="c n" style="left:1666px;top:729px;width:62px;height:23px;background:#efefef"><span class="L">۴۳,۵۸۸</span></div>
<div class="c n" style="left:1605px;top:729px;width:60px;height:23px;background:#efefef"><span class="L">۴۳,۲۹۸</span></div>
<div class="c n" style="left:1528px;top:729px;width:76px;height:23px;background:#fde19e"><span class="L">۸,۴<span class="z">۰</span>۵,<span class="z">۰</span>۵۳</span></div>
<div class="c n" style="left:1433px;top:729px;width:94px;height:23px;background:#efefef"><span class="L">۳۶۳,۹۲۲</span></div>
<div class="c n" style="left:1390px;top:729px;width:42px;height:23px;background:#efefef"></div>
<div class="c n" style="left:1343px;top:729px;width:46px;height:23px;background:#efefef"><span class="red"><span class="L">(۲)</span></span></div>
<div class="c n" style="left:1254px;top:729px;width:88px;height:23px;background:#efefef"><span class="L">۳<span class="z">۰</span>,۵۸۸</span></div>
<div class="c n" style="left:1193px;top:729px;width:60px;height:23px;background:#fde19e"><span class="L">۴۳,۵۸۸</span></div>
<div class="c n" style="left:1132px;top:729px;width:60px;height:23px;background:#fde19e"><span class="L">۴۳,۲۹۶</span></div>
<div class="c n" style="left:1055px;top:729px;width:76px;height:23px;background:#fde19e"><span class="L">۹,۱۱۱,۹۲۷</span></div>
<div class="c n" style="left:964px;top:729px;width:90px;height:23px;background:#fde19e"><span class="L">۳۹۴,۵۱<span class="z">۰</span></span></div>
<div class="c n" style="left:911px;top:729px;width:52px;height:23px;background:#efefef"><span class="L">۱۳,۱۵۵</span></div>
<div class="c n" style="left:854px;top:729px;width:56px;height:23px;background:#efefef"><span class="L">۱۳,<span class="z">۰</span>۲۸</span></div>
<div class="c n" style="left:777px;top:729px;width:76px;height:23px;background:#fde19e"><span class="L">۹,<span class="z">۰</span>۹۵,۷۱۷</span></div>
<div class="c n" style="left:689px;top:729px;width:87px;height:23px;background:#efefef"><span class="L">۱۱۸,۴۹۹</span></div>
<div class="c n" style="left:629px;top:729px;width:59px;height:23px;background:#fde19e"><span class="L">۵۶,۷۴۳</span></div>
<div class="c n" style="left:569px;top:729px;width:59px;height:23px;background:#fde19e"><span class="L">۵۶,۳۲۴</span></div>
<div class="c n" style="left:491px;top:729px;width:77px;height:23px;background:#fde19e"><span class="L">۹,۱<span class="z">۰</span>۸,۱۷۸</span></div>
<div class="c n" style="left:399px;top:729px;width:91px;height:23px;background:#fde19e"><span class="L">۵۱۳,<span class="z">۰</span><span class="z">۰</span>۹</span></div>
<div class="c n" style="left:339px;top:729px;width:59px;height:23px;background:#efefef"><span class="L">۶۴,۹۸۶</span></div>
<div class="c n" style="left:275px;top:729px;width:63px;height:23px;background:#efefef"><span class="L">۶۴,۷۲<span class="z">۰</span></span></div>
<div class="c n" style="left:197px;top:729px;width:77px;height:23px;background:#fde19e"><span class="L">۵,۷<span class="z">۰</span>۹,۳۱۷</span></div>
<div class="c n" style="left:108px;top:729px;width:88px;height:23px;background:#efefef"><span class="L">۳۶۹,۵<span class="z">۰</span>۷</span></div>
<div class="c" style="left:36px;top:729px;width:71px;height:23px;background:#efefef;text-align:right;padding-right:2px;font-size:11.5px;font-weight:bold">تولید</div>
<div class="c" style="left:1772px;top:753px;width:112px;height:23px;background:#d3e4f5;text-align:right;padding-right:3px;line-height:16.5px;padding-top:3px;font-size:11.3px">سنسورهاي موتور</div>
<div class="c" style="left:1729px;top:753px;width:42px;height:23px;background:#d3e4f5;text-align:right;padding-right:2px;font-size:11px;-webkit-text-stroke:0.3px currentColor">مجموعه</div>
<div class="c n" style="left:1666px;top:753px;width:62px;height:23px;background:#d3e4f5"><span class="L">۲۸۶,۵۳۷</span></div>
<div class="c n" style="left:1605px;top:753px;width:60px;height:23px;background:#d3e4f5"><span class="L">۳۲<span class="z">۰</span>,۶<span class="z">۰</span>۲</span></div>
<div class="c n" style="left:1528px;top:753px;width:76px;height:23px;background:#fde19e"><span class="L">۱۳,۸۶۴,۹۴۵</span></div>
<div class="c n" style="left:1433px;top:753px;width:94px;height:23px;background:#d3e4f5"><span class="L">۴,۴۴۵,۱۲۹</span></div>
<div class="c n" style="left:1390px;top:753px;width:42px;height:23px;background:#d3e4f5"><span class="L">۱<span class="z">۰</span>۲</span></div>
<div class="c n" style="left:1343px;top:753px;width:46px;height:23px;background:#d3e4f5"></div>
<div class="c n" style="left:1254px;top:753px;width:88px;height:23px;background:#d3e4f5"><span class="L">۴<span class="z">۰</span>۶,۶۸۱</span></div>
<div class="c n" style="left:1193px;top:753px;width:60px;height:23px;background:#fde19e"><span class="L">۲۸۶,۶۳۹</span></div>
<div class="c n" style="left:1132px;top:753px;width:60px;height:23px;background:#fde19e"><span class="L">۳۲<span class="z">۰</span>,۶<span class="z">۰</span>۲</span></div>
<div class="c n" style="left:1055px;top:753px;width:76px;height:23px;background:#fde19e"><span class="L">۱۵,۱۳۳,۴۳۶</span></div>
<div class="c n" style="left:964px;top:753px;width:90px;height:23px;background:#fde19e"><span class="L">۴,۸۵۱,۸۱<span class="z">۰</span></span></div>
<div class="c n" style="left:911px;top:753px;width:52px;height:23px;background:#d3e4f5"><span class="L">۶۶,۸۷۲</span></div>
<div class="c n" style="left:854px;top:753px;width:56px;height:23px;background:#d3e4f5"><span class="L">۸۱,۹۳<span class="z">۰</span></span></div>
<div class="c n" style="left:777px;top:753px;width:76px;height:23px;background:#fde19e"><span class="L">۱۵,۹۷۱,۲<span class="z">۰</span>۷</span></div>
<div class="c n" style="left:689px;top:753px;width:87px;height:23px;background:#d3e4f5"><span class="L">۱,۳<span class="z">۰</span>۸,۵۲۱</span></div>
<div class="c n" style="left:629px;top:753px;width:59px;height:23px;background:#fde19e"><span class="L">۳۵۳,۵۱۱</span></div>
<div class="c n" style="left:569px;top:753px;width:59px;height:23px;background:#fde19e"><span class="L">۴<span class="z">۰</span>۲,۵۳۲</span></div>
<div class="c n" style="left:491px;top:753px;width:77px;height:23px;background:#fde19e"><span class="L">۱۵,۳<span class="z">۰</span>۳,۹۵۳</span></div>
<div class="c n" style="left:399px;top:753px;width:91px;height:23px;background:#fde19e"><span class="L">۶,۱۶<span class="z">۰</span>,۳۳۱</span></div>
<div class="c n" style="left:339px;top:753px;width:59px;height:23px;background:#d3e4f5"><span class="L">۸۷۳,۶۶۸</span></div>
<div class="c n" style="left:275px;top:753px;width:63px;height:23px;background:#d3e4f5"><span class="L">۷۶۴,۳۱۷</span></div>
<div class="c n" style="left:197px;top:753px;width:77px;height:23px;background:#fde19e"><span class="L">۹,<span class="z">۰</span>۷۱,۳۷۹</span></div>
<div class="c n" style="left:108px;top:753px;width:88px;height:23px;background:#d3e4f5"><span class="L">۶,۹۳۳,۴<span class="z">۰</span>۹</span></div>
<div class="c" style="left:36px;top:753px;width:71px;height:23px;background:#d3e4f5;text-align:right;padding-right:2px;font-size:11.5px;font-weight:bold">تولید</div>
<div class="c" style="left:1772px;top:777px;width:112px;height:23px;background:#efefef;text-align:right;padding-right:3px;line-height:16.5px;padding-top:3px;font-size:11.3px">مجموعه قفل مرکزي</div>
<div class="c" style="left:1729px;top:777px;width:42px;height:23px;background:#efefef;text-align:right;padding-right:2px;font-size:11px;-webkit-text-stroke:0.3px currentColor">مجموعه</div>
<div class="c n" style="left:1666px;top:777px;width:62px;height:23px;background:#efefef"><span class="L"><span class="z">۰</span></span></div>
<div class="c n" style="left:1605px;top:777px;width:60px;height:23px;background:#efefef"><span class="L"><span class="z">۰</span></span></div>
<div class="c n" style="left:1528px;top:777px;width:76px;height:23px;background:#fde19e"><span class="L"><span class="z">۰</span></span></div>
<div class="c n" style="left:1433px;top:777px;width:94px;height:23px;background:#efefef"><span class="L"><span class="z">۰</span></span></div>
<div class="c n" style="left:1390px;top:777px;width:42px;height:23px;background:#efefef"></div>
<div class="c n" style="left:1343px;top:777px;width:46px;height:23px;background:#efefef"></div>
<div class="c n" style="left:1254px;top:777px;width:88px;height:23px;background:#efefef"><span class="L"><span class="z">۰</span></span></div>
<div class="c n" style="left:1193px;top:777px;width:60px;height:23px;background:#fde19e"><span class="L"><span class="z">۰</span></span></div>
<div class="c n" style="left:1132px;top:777px;width:60px;height:23px;background:#fde19e"><span class="L"><span class="z">۰</span></span></div>
<div class="c n" style="left:1055px;top:777px;width:76px;height:23px;background:#fde19e"><span class="L"><span class="z">۰</span></span></div>
<div class="c n" style="left:964px;top:777px;width:90px;height:23px;background:#fde19e"><span class="L"><span class="z">۰</span></span></div>
<div class="c n" style="left:911px;top:777px;width:52px;height:23px;background:#efefef"></div>
<div class="c n" style="left:854px;top:777px;width:56px;height:23px;background:#efefef"></div>
<div class="c n" style="left:777px;top:777px;width:76px;height:23px;background:#fde19e"><span class="L"><span class="z">۰</span></span></div>
<div class="c n" style="left:689px;top:777px;width:87px;height:23px;background:#efefef"><span class="L"><span class="z">۰</span></span></div>
<div class="c n" style="left:629px;top:777px;width:59px;height:23px;background:#fde19e"><span class="L"><span class="z">۰</span></span></div>
<div class="c n" style="left:569px;top:777px;width:59px;height:23px;background:#fde19e"><span class="L"><span class="z">۰</span></span></div>
<div class="c n" style="left:491px;top:777px;width:77px;height:23px;background:#fde19e"><span class="L"><span class="z">۰</span></span></div>
<div class="c n" style="left:399px;top:777px;width:91px;height:23px;background:#fde19e"><span class="L"><span class="z">۰</span></span></div>
<div class="c n" style="left:339px;top:777px;width:59px;height:23px;background:#efefef"></div>
<div class="c n" style="left:275px;top:777px;width:63px;height:23px;background:#efefef"></div>
<div class="c n" style="left:197px;top:777px;width:77px;height:23px;background:#fde19e"><span class="L"><span class="z">۰</span></span></div>
<div class="c n" style="left:108px;top:777px;width:88px;height:23px;background:#efefef"><span class="L"><span class="z">۰</span></span></div>
<div class="c" style="left:36px;top:777px;width:71px;height:23px;background:#efefef;text-align:right;padding-right:2px;font-size:11.5px;font-weight:bold">تولید</div>
<div class="c" style="left:1772px;top:801px;width:112px;height:24px;background:#d3e4f5;text-align:right;padding-right:3px;line-height:16.5px;padding-top:3px;font-size:11.3px">مجموعه نود ها</div>
<div class="c" style="left:1729px;top:801px;width:42px;height:24px;background:#d3e4f5;text-align:right;padding-right:2px;font-size:11px;-webkit-text-stroke:0.3px currentColor">مجموعه</div>
<div class="c n" style="left:1666px;top:801px;width:62px;height:24px;background:#d3e4f5"><span class="L">۱<span class="z">۰</span>۳,۱۵۹</span></div>
<div class="c n" style="left:1605px;top:801px;width:60px;height:24px;background:#d3e4f5"><span class="L">۱<span class="z">۰</span><span class="z">۰</span>,<span class="z">۰</span>۲۱</span></div>
<div class="c n" style="left:1528px;top:801px;width:76px;height:24px;background:#fde19e"><span class="L">۵۵,<span class="z">۰</span>۶۱,۲۹۷</span></div>
<div class="c n" style="left:1433px;top:801px;width:94px;height:24px;background:#d3e4f5"><span class="L">۵,۵<span class="z">۰</span>۷,۲۸۶</span></div>
<div class="c n" style="left:1390px;top:801px;width:42px;height:24px;background:#d3e4f5"><span class="L">۲<span class="z">۰</span></span></div>
<div class="c n" style="left:1343px;top:801px;width:46px;height:24px;background:#d3e4f5"></div>
<div class="c n" style="left:1254px;top:801px;width:88px;height:24px;background:#d3e4f5"><span class="L">۴۵۷,۹۶۹</span></div>
<div class="c n" style="left:1193px;top:801px;width:60px;height:24px;background:#fde19e"><span class="L">۱<span class="z">۰</span>۳,۱۷۹</span></div>
<div class="c n" style="left:1132px;top:801px;width:60px;height:24px;background:#fde19e"><span class="L">۱<span class="z">۰</span><span class="z">۰</span>,<span class="z">۰</span>۲۱</span></div>
<div class="c n" style="left:1055px;top:801px;width:76px;height:24px;background:#fde19e"><span class="L">۵۹,۶۴<span class="z">۰</span>,<span class="z">۰</span>۲۶</span></div>
<div class="c n" style="left:964px;top:801px;width:90px;height:24px;background:#fde19e"><span class="L">۵,۹۶۵,۲۵۵</span></div>
<div class="c n" style="left:911px;top:801px;width:52px;height:24px;background:#d3e4f5"><span class="L">۲۳,<span class="z">۰</span><span class="z">۰</span>۷</span></div>
<div class="c n" style="left:854px;top:801px;width:56px;height:24px;background:#d3e4f5"><span class="L">۲۲,۲۷۸</span></div>
<div class="c n" style="left:777px;top:801px;width:76px;height:24px;background:#fde19e"><span class="L">۵۷,۶۷۵,۸۲۴</span></div>
<div class="c n" style="left:689px;top:801px;width:87px;height:24px;background:#d3e4f5"><span class="L">۱,۲۸۴,۹<span class="z">۰</span>۲</span></div>
<div class="c n" style="left:629px;top:801px;width:59px;height:24px;background:#fde19e"><span class="L">۱۲۶,۱۸۶</span></div>
<div class="c n" style="left:569px;top:801px;width:59px;height:24px;background:#fde19e"><span class="L">۱۲۲,۲۹۹</span></div>
<div class="c n" style="left:491px;top:801px;width:77px;height:24px;background:#fde19e"><span class="L">۵۹,۲۸۲,۲۲۶</span></div>
<div class="c n" style="left:399px;top:801px;width:91px;height:24px;background:#fde19e"><span class="L">۷,۲۵<span class="z">۰</span>,۱۵۷</span></div>
<div class="c n" style="left:339px;top:801px;width:59px;height:24px;background:#d3e4f5"><span class="L">۱۱<span class="z">۰</span>,۹<span class="z">۰</span>۶</span></div>
<div class="c n" style="left:275px;top:801px;width:63px;height:24px;background:#d3e4f5"><span class="L">۱۴۸,۶<span class="z">۰</span>۷</span></div>
<div class="c n" style="left:197px;top:801px;width:77px;height:24px;background:#fde19e"><span class="L">۲۷,۲۶۷,<span class="z">۰</span>۵۳</span></div>
<div class="c n" style="left:108px;top:801px;width:88px;height:24px;background:#d3e4f5"><span class="L">۴,<span class="z">۰</span>۵۲,<span class="z">۰</span>۷۵</span></div>
<div class="c" style="left:36px;top:801px;width:71px;height:24px;background:#d3e4f5;text-align:right;padding-right:2px;font-size:11.5px;font-weight:bold">تولید</div>
<div class="c" style="left:1772px;top:826px;width:112px;height:23px;background:#efefef;text-align:right;padding-right:3px;line-height:16.5px;padding-top:3px;font-size:11.3px">جلو آمپر پژو پرايد</div>
<div class="c" style="left:1729px;top:826px;width:42px;height:23px;background:#efefef;text-align:right;padding-right:2px;font-size:11px;-webkit-text-stroke:0.3px currentColor">مجموعه</div>
<div class="c n" style="left:1666px;top:826px;width:62px;height:23px;background:#efefef"><span class="L">۱۱۷,۶<span class="z">۰</span>۷</span></div>
<div class="c n" style="left:1605px;top:826px;width:60px;height:23px;background:#efefef"><span class="L">۱۱۶,۷۴۱</span></div>
<div class="c n" style="left:1528px;top:826px;width:76px;height:23px;background:#fde19e"><span class="L">۲۷,۲۷۹,۸۷۶</span></div>
<div class="c n" style="left:1433px;top:826px;width:94px;height:23px;background:#efefef"><span class="L">۳,۱۸۴,۶۸<span class="z">۰</span></span></div>
<div class="c n" style="left:1390px;top:826px;width:42px;height:23px;background:#efefef"><span class="L">۵۷۲</span></div>
<div class="c n" style="left:1343px;top:826px;width:46px;height:23px;background:#efefef"><span class="red"><span class="L">(۲)</span></span></div>
<div class="c n" style="left:1254px;top:826px;width:88px;height:23px;background:#efefef"><span class="L">۴۶۲,۷۶۱</span></div>
<div class="c n" style="left:1193px;top:826px;width:60px;height:23px;background:#fde19e"><span class="L">۱۱۸,۱۷۹</span></div>
<div class="c n" style="left:1132px;top:826px;width:60px;height:23px;background:#fde19e"><span class="L">۱۱۶,۷۳۹</span></div>
<div class="c n" style="left:1055px;top:826px;width:76px;height:23px;background:#fde19e"><span class="L">۳۱,۲۴۴,۴<span class="z">۰</span>۸</span></div>
<div class="c n" style="left:964px;top:826px;width:90px;height:23px;background:#fde19e"><span class="L">۳,۶۴۷,۴۴۱</span></div>
<div class="c n" style="left:911px;top:826px;width:52px;height:23px;background:#efefef"><span class="L">۳۲,۴۲۳</span></div>
<div class="c n" style="left:854px;top:826px;width:56px;height:23px;background:#efefef"><span class="L">۳۳,۸۶۷</span></div>
<div class="c n" style="left:777px;top:826px;width:76px;height:23px;background:#fde19e"><span class="L">۲۹,۸۱۶,۳۹۹</span></div>
<div class="c n" style="left:689px;top:826px;width:87px;height:23px;background:#efefef"><span class="L">۱,<span class="z">۰</span><span class="z">۰</span>۹,۷۹۲</span></div>
<div class="c n" style="left:629px;top:826px;width:59px;height:23px;background:#fde19e"><span class="L">۱۵<span class="z">۰</span>,۶<span class="z">۰</span>۲</span></div>
<div class="c n" style="left:569px;top:826px;width:59px;height:23px;background:#fde19e"><span class="L">۱۵<span class="z">۰</span>,۶<span class="z">۰</span>۶</span></div>
<div class="c n" style="left:491px;top:826px;width:77px;height:23px;background:#fde19e"><span class="L">۳<span class="z">۰</span>,۹۲۳,۲۹<span class="z">۰</span></span></div>
<div class="c n" style="left:399px;top:826px;width:91px;height:23px;background:#fde19e"><span class="L">۴,۶۵۷,۲۳۳</span></div>
<div class="c n" style="left:339px;top:826px;width:59px;height:23px;background:#efefef"><span class="L">۱۶۴,۶۹۹</span></div>
<div class="c n" style="left:275px;top:826px;width:63px;height:23px;background:#efefef"><span class="L">۱۶۴,۷۵۶</span></div>
<div class="c n" style="left:197px;top:826px;width:77px;height:23px;background:#fde19e"><span class="L">۱۷,۶۱۴,۴۹۱</span></div>
<div class="c n" style="left:108px;top:826px;width:88px;height:23px;background:#efefef"><span class="L">۲,۹<span class="z">۰</span>۲,<span class="z">۰</span>۹۳</span></div>
<div class="c" style="left:36px;top:826px;width:71px;height:23px;background:#efefef;text-align:right;padding-right:2px;font-size:11.5px;font-weight:bold">تولید</div>
<div class="c" style="left:1772px;top:850px;width:112px;height:40px;background:#d3e4f5;text-align:right;padding-right:3px;line-height:16.5px;padding-top:3px;font-size:11.3px">گيرنده فرستنده قفل<br>درب خودرو</div>
<div class="c" style="left:1729px;top:850px;width:42px;height:40px;background:#d3e4f5;text-align:right;padding-right:2px;font-size:11px;-webkit-text-stroke:0.3px currentColor">مجموعه</div>
<div class="c n" style="left:1666px;top:850px;width:62px;height:40px;background:#d3e4f5"><span class="L"><span class="z">۰</span></span></div>
<div class="c n" style="left:1605px;top:850px;width:60px;height:40px;background:#d3e4f5"><span class="L"><span class="z">۰</span></span></div>
<div class="c n" style="left:1528px;top:850px;width:76px;height:40px;background:#fde19e"><span class="L"><span class="z">۰</span></span></div>
<div class="c n" style="left:1433px;top:850px;width:94px;height:40px;background:#d3e4f5"><span class="L"><span class="z">۰</span></span></div>
<div class="c n" style="left:1390px;top:850px;width:42px;height:40px;background:#d3e4f5"></div>
<div class="c n" style="left:1343px;top:850px;width:46px;height:40px;background:#d3e4f5"></div>
<div class="c n" style="left:1254px;top:850px;width:88px;height:40px;background:#d3e4f5"><span class="L"><span class="z">۰</span></span></div>
<div class="c n" style="left:1193px;top:850px;width:60px;height:40px;background:#fde19e"><span class="L"><span class="z">۰</span></span></div>
<div class="c n" style="left:1132px;top:850px;width:60px;height:40px;background:#fde19e"><span class="L"><span class="z">۰</span></span></div>
<div class="c n" style="left:1055px;top:850px;width:76px;height:40px;background:#fde19e"><span class="L"><span class="z">۰</span></span></div>
<div class="c n" style="left:964px;top:850px;width:90px;height:40px;background:#fde19e"><span class="L"><span class="z">۰</span></span></div>
<div class="c n" style="left:911px;top:850px;width:52px;height:40px;background:#d3e4f5"></div>
<div class="c n" style="left:854px;top:850px;width:56px;height:40px;background:#d3e4f5"></div>
<div class="c n" style="left:777px;top:850px;width:76px;height:40px;background:#fde19e"><span class="L"><span class="z">۰</span></span></div>
<div class="c n" style="left:689px;top:850px;width:87px;height:40px;background:#d3e4f5"><span class="L"><span class="z">۰</span></span></div>
<div class="c n" style="left:629px;top:850px;width:59px;height:40px;background:#fde19e"><span class="L"><span class="z">۰</span></span></div>
<div class="c n" style="left:569px;top:850px;width:59px;height:40px;background:#fde19e"><span class="L"><span class="z">۰</span></span></div>
<div class="c n" style="left:491px;top:850px;width:77px;height:40px;background:#fde19e"><span class="L"><span class="z">۰</span></span></div>
<div class="c n" style="left:399px;top:850px;width:91px;height:40px;background:#fde19e"><span class="L"><span class="z">۰</span></span></div>
<div class="c n" style="left:339px;top:850px;width:59px;height:40px;background:#d3e4f5"></div>
<div class="c n" style="left:275px;top:850px;width:63px;height:40px;background:#d3e4f5"></div>
<div class="c n" style="left:197px;top:850px;width:77px;height:40px;background:#fde19e"><span class="L"><span class="z">۰</span></span></div>
<div class="c n" style="left:108px;top:850px;width:88px;height:40px;background:#d3e4f5"><span class="L"><span class="z">۰</span></span></div>
<div class="c" style="left:36px;top:850px;width:71px;height:40px;background:#d3e4f5;text-align:right;padding-right:2px;font-size:11.5px;font-weight:bold">تولید</div>
<div class="c" style="left:1772px;top:891px;width:112px;height:40px;background:#efefef;text-align:right;padding-right:3px;line-height:16.5px;padding-top:3px;font-size:11.3px">سنسورهاي موانع<br>عقب خودرو</div>
<div class="c" style="left:1729px;top:891px;width:42px;height:40px;background:#efefef;text-align:right;padding-right:2px;font-size:11px;-webkit-text-stroke:0.3px currentColor">مجموعه</div>
<div class="c n" style="left:1666px;top:891px;width:62px;height:40px;background:#efefef"><span class="L"><span class="z">۰</span></span></div>
<div class="c n" style="left:1605px;top:891px;width:60px;height:40px;background:#efefef"><span class="L"><span class="z">۰</span></span></div>
<div class="c n" style="left:1528px;top:891px;width:76px;height:40px;background:#fde19e"><span class="L"><span class="z">۰</span></span></div>
<div class="c n" style="left:1433px;top:891px;width:94px;height:40px;background:#efefef"><span class="L"><span class="z">۰</span></span></div>
<div class="c n" style="left:1390px;top:891px;width:42px;height:40px;background:#efefef"></div>
<div class="c n" style="left:1343px;top:891px;width:46px;height:40px;background:#efefef"></div>
<div class="c n" style="left:1254px;top:891px;width:88px;height:40px;background:#efefef"><span class="L"><span class="z">۰</span></span></div>
<div class="c n" style="left:1193px;top:891px;width:60px;height:40px;background:#fde19e"><span class="L"><span class="z">۰</span></span></div>
<div class="c n" style="left:1132px;top:891px;width:60px;height:40px;background:#fde19e"><span class="L"><span class="z">۰</span></span></div>
<div class="c n" style="left:1055px;top:891px;width:76px;height:40px;background:#fde19e"><span class="L"><span class="z">۰</span></span></div>
<div class="c n" style="left:964px;top:891px;width:90px;height:40px;background:#fde19e"><span class="L"><span class="z">۰</span></span></div>
<div class="c n" style="left:911px;top:891px;width:52px;height:40px;background:#efefef"></div>
<div class="c n" style="left:854px;top:891px;width:56px;height:40px;background:#efefef"></div>
<div class="c n" style="left:777px;top:891px;width:76px;height:40px;background:#fde19e"><span class="L"><span class="z">۰</span></span></div>
<div class="c n" style="left:689px;top:891px;width:87px;height:40px;background:#efefef"><span class="L"><span class="z">۰</span></span></div>
<div class="c n" style="left:629px;top:891px;width:59px;height:40px;background:#fde19e"><span class="L"><span class="z">۰</span></span></div>
<div class="c n" style="left:569px;top:891px;width:59px;height:40px;background:#fde19e"><span class="L"><span class="z">۰</span></span></div>
<div class="c n" style="left:491px;top:891px;width:77px;height:40px;background:#fde19e"><span class="L"><span class="z">۰</span></span></div>
<div class="c n" style="left:399px;top:891px;width:91px;height:40px;background:#fde19e"><span class="L"><span class="z">۰</span></span></div>
<div class="c n" style="left:339px;top:891px;width:59px;height:40px;background:#efefef"></div>
<div class="c n" style="left:275px;top:891px;width:63px;height:40px;background:#efefef"></div>
<div class="c n" style="left:197px;top:891px;width:77px;height:40px;background:#fde19e"><span class="L"><span class="z">۰</span></span></div>
<div class="c n" style="left:108px;top:891px;width:88px;height:40px;background:#efefef"><span class="L"><span class="z">۰</span></span></div>
<div class="c" style="left:36px;top:891px;width:71px;height:40px;background:#efefef;text-align:right;padding-right:2px;font-size:11.5px;font-weight:bold">تولید</div>
<div class="c" style="left:1772px;top:932px;width:112px;height:23px;background:#d3e4f5;text-align:right;padding-right:3px;line-height:16.5px;padding-top:3px;font-size:11.3px">دريچه گاز برقي</div>
<div class="c" style="left:1729px;top:932px;width:42px;height:23px;background:#d3e4f5;text-align:right;padding-right:2px;font-size:11px;-webkit-text-stroke:0.3px currentColor">مجموعه</div>
<div class="c n" style="left:1666px;top:932px;width:62px;height:23px;background:#d3e4f5"><span class="L">۳۵,۳۱۲</span></div>
<div class="c n" style="left:1605px;top:932px;width:60px;height:23px;background:#d3e4f5"><span class="L">۳۲,۶۱۹</span></div>
<div class="c n" style="left:1528px;top:932px;width:76px;height:23px;background:#fde19e"><span class="L">۲۵,۵۵۶,۵۱۶</span></div>
<div class="c n" style="left:1433px;top:932px;width:94px;height:23px;background:#d3e4f5"><span class="L">۸۳۳,۶۲۸</span></div>
<div class="c n" style="left:1390px;top:932px;width:42px;height:23px;background:#d3e4f5"></div>
<div class="c n" style="left:1343px;top:932px;width:46px;height:23px;background:#d3e4f5"><span class="red"><span class="L">(۱)</span></span></div>
<div class="c n" style="left:1254px;top:932px;width:88px;height:23px;background:#d3e4f5"><span class="L">۶۶,۵۱۳</span></div>
<div class="c n" style="left:1193px;top:932px;width:60px;height:23px;background:#fde19e"><span class="L">۳۵,۳۱۲</span></div>
<div class="c n" style="left:1132px;top:932px;width:60px;height:23px;background:#fde19e"><span class="L">۳۲,۶۱۸</span></div>
<div class="c n" style="left:1055px;top:932px;width:76px;height:23px;background:#fde19e"><span class="L">۲۷,۵۹۶,۴۵<span class="z">۰</span></span></div>
<div class="c n" style="left:964px;top:932px;width:90px;height:23px;background:#fde19e"><span class="L">۹<span class="z">۰</span><span class="z">۰</span>,۱۴۱</span></div>
<div class="c n" style="left:911px;top:932px;width:52px;height:23px;background:#d3e4f5"><span class="L">۲,۴۱<span class="z">۰</span></span></div>
<div class="c n" style="left:854px;top:932px;width:56px;height:23px;background:#d3e4f5"><span class="L">۳,۷۱۵</span></div>
<div class="c n" style="left:777px;top:932px;width:76px;height:23px;background:#fde19e"><span class="L">۲۷,۴<span class="z">۰</span>۵,۹۲۲</span></div>
<div class="c n" style="left:689px;top:932px;width:87px;height:23px;background:#d3e4f5"><span class="L">۱<span class="z">۰</span>۱,۸۱۳</span></div>
<div class="c n" style="left:629px;top:932px;width:59px;height:23px;background:#fde19e"><span class="L">۳۷,۷۲۲</span></div>
<div class="c n" style="left:569px;top:932px;width:59px;height:23px;background:#fde19e"><span class="L">۳۶,۳۳۳</span></div>
<div class="c n" style="left:491px;top:932px;width:77px;height:23px;background:#fde19e"><span class="L">۲۷,۵۷۶,۹۶۹</span></div>
<div class="c n" style="left:399px;top:932px;width:91px;height:23px;background:#fde19e"><span class="L">۱,<span class="z">۰</span><span class="z">۰</span>۱,۹۵۴</span></div>
<div class="c n" style="left:339px;top:932px;width:59px;height:23px;background:#d3e4f5"><span class="L">۵۶,۸۱۳</span></div>
<div class="c n" style="left:275px;top:932px;width:63px;height:23px;background:#d3e4f5"><span class="L">۵۹,۶۵<span class="z">۰</span></span></div>
<div class="c n" style="left:197px;top:932px;width:77px;height:23px;background:#fde19e"><span class="L">۱۶,۷۱۲,<span class="z">۰</span>۵۴</span></div>
<div class="c n" style="left:108px;top:932px;width:88px;height:23px;background:#d3e4f5"><span class="L">۹۹۶,۸۷۴</span></div>
<div class="c" style="left:36px;top:932px;width:71px;height:23px;background:#d3e4f5;text-align:right;padding-right:2px;font-size:11.5px;font-weight:bold">تولید</div>
<div class="c" style="left:1772px;top:956px;width:112px;height:24px;background:#efefef;text-align:right;padding-right:3px;line-height:16.5px;padding-top:3px;font-size:11.3px">راديو پخش اتومبيل</div>
<div class="c" style="left:1729px;top:956px;width:42px;height:24px;background:#efefef;text-align:right;padding-right:2px;font-size:11px;-webkit-text-stroke:0.3px currentColor">دستگاه</div>
<div class="c n" style="left:1666px;top:956px;width:62px;height:24px;background:#efefef"><span class="L"><span class="z">۰</span></span></div>
<div class="c n" style="left:1605px;top:956px;width:60px;height:24px;background:#efefef"><span class="L"><span class="z">۰</span></span></div>
<div class="c n" style="left:1528px;top:956px;width:76px;height:24px;background:#fde19e"><span class="L"><span class="z">۰</span></span></div>
<div class="c n" style="left:1433px;top:956px;width:94px;height:24px;background:#efefef"><span class="L"><span class="z">۰</span></span></div>
<div class="c n" style="left:1390px;top:956px;width:42px;height:24px;background:#efefef"></div>
<div class="c n" style="left:1343px;top:956px;width:46px;height:24px;background:#efefef"></div>
<div class="c n" style="left:1254px;top:956px;width:88px;height:24px;background:#efefef"><span class="L"><span class="z">۰</span></span></div>
<div class="c n" style="left:1193px;top:956px;width:60px;height:24px;background:#fde19e"><span class="L"><span class="z">۰</span></span></div>
<div class="c n" style="left:1132px;top:956px;width:60px;height:24px;background:#fde19e"><span class="L"><span class="z">۰</span></span></div>
<div class="c n" style="left:1055px;top:956px;width:76px;height:24px;background:#fde19e"><span class="L"><span class="z">۰</span></span></div>
<div class="c n" style="left:964px;top:956px;width:90px;height:24px;background:#fde19e"><span class="L"><span class="z">۰</span></span></div>
<div class="c n" style="left:911px;top:956px;width:52px;height:24px;background:#efefef"></div>
<div class="c n" style="left:854px;top:956px;width:56px;height:24px;background:#efefef"></div>
<div class="c n" style="left:777px;top:956px;width:76px;height:24px;background:#fde19e"><span class="L"><span class="z">۰</span></span></div>
<div class="c n" style="left:689px;top:956px;width:87px;height:24px;background:#efefef"><span class="L"><span class="z">۰</span></span></div>
<div class="c n" style="left:629px;top:956px;width:59px;height:24px;background:#fde19e"><span class="L"><span class="z">۰</span></span></div>
<div class="c n" style="left:569px;top:956px;width:59px;height:24px;background:#fde19e"><span class="L"><span class="z">۰</span></span></div>
<div class="c n" style="left:491px;top:956px;width:77px;height:24px;background:#fde19e"><span class="L"><span class="z">۰</span></span></div>
<div class="c n" style="left:399px;top:956px;width:91px;height:24px;background:#fde19e"><span class="L"><span class="z">۰</span></span></div>
<div class="c n" style="left:339px;top:956px;width:59px;height:24px;background:#efefef"></div>
<div class="c n" style="left:275px;top:956px;width:63px;height:24px;background:#efefef"></div>
<div class="c n" style="left:197px;top:956px;width:77px;height:24px;background:#fde19e"><span class="L"><span class="z">۰</span></span></div>
<div class="c n" style="left:108px;top:956px;width:88px;height:24px;background:#efefef"><span class="L"><span class="z">۰</span></span></div>
<div class="c" style="left:36px;top:956px;width:71px;height:24px;background:#efefef;text-align:right;padding-right:2px;font-size:11.5px;font-weight:bold">تولید</div>
<div class="c" style="left:1772px;top:981px;width:112px;height:23px;background:#d3e4f5;text-align:right;padding-right:3px;line-height:16.5px;padding-top:3px;font-size:11.3px">مجموعه داشبورد</div>
<div class="c" style="left:1729px;top:981px;width:42px;height:23px;background:#d3e4f5;text-align:right;padding-right:2px;font-size:11px;-webkit-text-stroke:0.3px currentColor">مجموعه</div>
<div class="c n" style="left:1666px;top:981px;width:62px;height:23px;background:#d3e4f5"><span class="L"><span class="z">۰</span></span></div>
<div class="c n" style="left:1605px;top:981px;width:60px;height:23px;background:#d3e4f5"><span class="L"><span class="z">۰</span></span></div>
<div class="c n" style="left:1528px;top:981px;width:76px;height:23px;background:#fde19e"><span class="L"><span class="z">۰</span></span></div>
<div class="c n" style="left:1433px;top:981px;width:94px;height:23px;background:#d3e4f5"><span class="L"><span class="z">۰</span></span></div>
<div class="c n" style="left:1390px;top:981px;width:42px;height:23px;background:#d3e4f5"></div>
<div class="c n" style="left:1343px;top:981px;width:46px;height:23px;background:#d3e4f5"></div>
<div class="c n" style="left:1254px;top:981px;width:88px;height:23px;background:#d3e4f5"><span class="L"><span class="z">۰</span></span></div>
<div class="c n" style="left:1193px;top:981px;width:60px;height:23px;background:#fde19e"><span class="L"><span class="z">۰</span></span></div>
<div class="c n" style="left:1132px;top:981px;width:60px;height:23px;background:#fde19e"><span class="L"><span class="z">۰</span></span></div>
<div class="c n" style="left:1055px;top:981px;width:76px;height:23px;background:#fde19e"><span class="L"><span class="z">۰</span></span></div>
<div class="c n" style="left:964px;top:981px;width:90px;height:23px;background:#fde19e"><span class="L"><span class="z">۰</span></span></div>
<div class="c n" style="left:911px;top:981px;width:52px;height:23px;background:#d3e4f5"></div>
<div class="c n" style="left:854px;top:981px;width:56px;height:23px;background:#d3e4f5"></div>
<div class="c n" style="left:777px;top:981px;width:76px;height:23px;background:#fde19e"><span class="L"><span class="z">۰</span></span></div>
<div class="c n" style="left:689px;top:981px;width:87px;height:23px;background:#d3e4f5"><span class="L"><span class="z">۰</span></span></div>
<div class="c n" style="left:629px;top:981px;width:59px;height:23px;background:#fde19e"><span class="L"><span class="z">۰</span></span></div>
<div class="c n" style="left:569px;top:981px;width:59px;height:23px;background:#fde19e"><span class="L"><span class="z">۰</span></span></div>
<div class="c n" style="left:491px;top:981px;width:77px;height:23px;background:#fde19e"><span class="L"><span class="z">۰</span></span></div>
<div class="c n" style="left:399px;top:981px;width:91px;height:23px;background:#fde19e"><span class="L"><span class="z">۰</span></span></div>
<div class="c n" style="left:339px;top:981px;width:59px;height:23px;background:#d3e4f5"><span class="L">۵۸</span></div>
<div class="c n" style="left:275px;top:981px;width:63px;height:23px;background:#d3e4f5"><span class="L">۱<span class="z">۰</span></span></div>
<div class="c n" style="left:197px;top:981px;width:77px;height:23px;background:#fde19e"><span class="L">۸۷,<span class="z">۰</span><span class="z">۰</span><span class="z">۰</span>,<span class="z">۰</span><span class="z">۰</span><span class="z">۰</span></span></div>
<div class="c n" style="left:108px;top:981px;width:88px;height:23px;background:#d3e4f5"><span class="L">۸۷<span class="z">۰</span></span></div>
<div class="c" style="left:36px;top:981px;width:71px;height:23px;background:#d3e4f5;text-align:right;padding-right:2px;font-size:11.5px;font-weight:bold">تولید</div>
<div class="c" style="left:1772px;top:1005px;width:112px;height:23px;background:#efefef;text-align:right;padding-right:3px;line-height:16.5px;padding-top:3px;font-size:11.3px">ساير</div>
<div class="c" style="left:1729px;top:1005px;width:42px;height:23px;background:#efefef;text-align:right;padding-right:2px;font-size:11px;-webkit-text-stroke:0.3px currentColor">مجموعه</div>
<div class="c n" style="left:1666px;top:1005px;width:62px;height:23px;background:#efefef"><span class="L">۴۸<span class="z">۰</span>,۳۸۷</span></div>
<div class="c n" style="left:1605px;top:1005px;width:60px;height:23px;background:#efefef"><span class="L">۴<span class="z">۰</span><span class="z">۰</span>,۵۳۷</span></div>
<div class="c n" style="left:1528px;top:1005px;width:76px;height:23px;background:#fde19e"><span class="L">۴,۹۲۸,۸۹۸</span></div>
<div class="c n" style="left:1433px;top:1005px;width:94px;height:23px;background:#efefef"><span class="L">۱,۹۷۴,۲<span class="z">۰</span>۶</span></div>
<div class="c n" style="left:1390px;top:1005px;width:42px;height:23px;background:#efefef"><span class="red"><span class="L">(۴۴<span class="z">۰</span>)</span></span></div>
<div class="c n" style="left:1343px;top:1005px;width:46px;height:23px;background:#efefef"><span class="L">۳</span></div>
<div class="c n" style="left:1254px;top:1005px;width:88px;height:23px;background:#efefef"><span class="L">۳<span class="z">۰</span>,۹۱۴</span></div>
<div class="c n" style="left:1193px;top:1005px;width:60px;height:23px;background:#fde19e"><span class="L">۴۷۹,۹۴۷</span></div>
<div class="c n" style="left:1132px;top:1005px;width:60px;height:23px;background:#fde19e"><span class="L">۴<span class="z">۰</span><span class="z">۰</span>,۵۴<span class="z">۰</span></span></div>
<div class="c n" style="left:1055px;top:1005px;width:76px;height:23px;background:#fde19e"><span class="L">۵,<span class="z">۰</span><span class="z">۰</span>۶,<span class="z">۰</span>۴۲</span></div>
<div class="c n" style="left:964px;top:1005px;width:90px;height:23px;background:#fde19e"><span class="L">۲,<span class="z">۰</span><span class="z">۰</span>۵,۱۲<span class="z">۰</span></span></div>
<div class="c n" style="left:911px;top:1005px;width:52px;height:23px;background:#efefef"><span class="L">۸۱,۲۶۲</span></div>
<div class="c n" style="left:854px;top:1005px;width:56px;height:23px;background:#efefef"><span class="L">۷۵,۵۴۲</span></div>
<div class="c n" style="left:777px;top:1005px;width:76px;height:23px;background:#fde19e"><span class="L">۱,۶۴۲,۶<span class="z">۰</span>۹</span></div>
<div class="c n" style="left:689px;top:1005px;width:87px;height:23px;background:#efefef"><span class="L">۱۲۴,<span class="z">۰</span>۸۶</span></div>
<div class="c n" style="left:629px;top:1005px;width:59px;height:23px;background:#fde19e"><span class="L">۵۶۱,۲<span class="z">۰</span>۹</span></div>
<div class="c n" style="left:569px;top:1005px;width:59px;height:23px;background:#fde19e"><span class="L">۴۷۶,<span class="z">۰</span>۸۲</span></div>
<div class="c n" style="left:491px;top:1005px;width:77px;height:23px;background:#fde19e"><span class="L">۴,۴۷۲,۳۵۱</span></div>
<div class="c n" style="left:399px;top:1005px;width:91px;height:23px;background:#fde19e"><span class="L">۲,۱۲۹,۲<span class="z">۰</span>۶</span></div>
<div class="c n" style="left:339px;top:1005px;width:59px;height:23px;background:#efefef"><span class="L">۱,۹۴۳,۸۵۶</span></div>
<div class="c n" style="left:275px;top:1005px;width:63px;height:23px;background:#efefef"><span class="L">۲,۵۴۳,۲۴۴</span></div>
<div class="c n" style="left:197px;top:1005px;width:77px;height:23px;background:#fde19e"><span class="L">۱۲۱,۹۸<span class="z">۰</span></span></div>
<div class="c n" style="left:108px;top:1005px;width:88px;height:23px;background:#efefef"><span class="L">۳۱<span class="z">۰</span>,۲۲۴</span></div>
<div class="c" style="left:36px;top:1005px;width:71px;height:23px;background:#efefef;text-align:right;padding-right:2px;font-size:11.5px;font-weight:bold">تولید</div>
<div class="c" style="left:1772px;top:1029px;width:112px;height:23px;background:#d3e4f5;text-align:right;padding-right:3px;line-height:16.5px;padding-top:3px;font-size:11.3px">انواع کليد هاي فرمان</div>
<div class="c" style="left:1729px;top:1029px;width:42px;height:23px;background:#d3e4f5;text-align:right;padding-right:2px;font-size:11px;-webkit-text-stroke:0.3px currentColor">مجموعه</div>
<div class="c n" style="left:1666px;top:1029px;width:62px;height:23px;background:#d3e4f5"><span class="L">۷۴,۵۶۱</span></div>
<div class="c n" style="left:1605px;top:1029px;width:60px;height:23px;background:#d3e4f5"><span class="L">۷۵,۲۵۹</span></div>
<div class="c n" style="left:1528px;top:1029px;width:76px;height:23px;background:#fde19e"><span class="L">۴,۶<span class="z">۰</span><span class="z">۰</span>,۶<span class="z">۰</span>۶</span></div>
<div class="c n" style="left:1433px;top:1029px;width:94px;height:23px;background:#d3e4f5"><span class="L">۳۴۶,۲۳۷</span></div>
<div class="c n" style="left:1390px;top:1029px;width:42px;height:23px;background:#d3e4f5"><span class="L">۳۲۴</span></div>
<div class="c n" style="left:1343px;top:1029px;width:46px;height:23px;background:#d3e4f5"></div>
<div class="c n" style="left:1254px;top:1029px;width:88px;height:23px;background:#d3e4f5"><span class="L">۱۱۵,۵۷۹</span></div>
<div class="c n" style="left:1193px;top:1029px;width:60px;height:23px;background:#fde19e"><span class="L">۷۴,۸۸۵</span></div>
<div class="c n" style="left:1132px;top:1029px;width:60px;height:23px;background:#fde19e"><span class="L">۷۵,۲۵۹</span></div>
<div class="c n" style="left:1055px;top:1029px;width:76px;height:23px;background:#fde19e"><span class="L">۶,۱۳۶,۳۵۶</span></div>
<div class="c n" style="left:964px;top:1029px;width:90px;height:23px;background:#fde19e"><span class="L">۴۶۱,۸۱۶</span></div>
<div class="c n" style="left:911px;top:1029px;width:52px;height:23px;background:#d3e4f5"><span class="L">۲۳,۳۸۸</span></div>
<div class="c n" style="left:854px;top:1029px;width:56px;height:23px;background:#d3e4f5"><span class="L">۲۳,۵۳۲</span></div>
<div class="c n" style="left:777px;top:1029px;width:76px;height:23px;background:#fde19e"><span class="L">۵,۷۱۱,۹۶۷</span></div>
<div class="c n" style="left:689px;top:1029px;width:87px;height:23px;background:#d3e4f5"><span class="L">۱۳۴,۴۱۴</span></div>
<div class="c n" style="left:629px;top:1029px;width:59px;height:23px;background:#fde19e"><span class="L">۹۸,۲۷۳</span></div>
<div class="c n" style="left:569px;top:1029px;width:59px;height:23px;background:#fde19e"><span class="L">۹۸,۷۹۱</span></div>
<div class="c n" style="left:491px;top:1029px;width:77px;height:23px;background:#fde19e"><span class="L">۶,<span class="z">۰</span>۳۵,۲۶۶</span></div>
<div class="c n" style="left:399px;top:1029px;width:91px;height:23px;background:#fde19e"><span class="L">۵۹۶,۲۳<span class="z">۰</span></span></div>
<div class="c n" style="left:339px;top:1029px;width:59px;height:23px;background:#d3e4f5"><span class="L"><span class="z">۰</span></span></div>
<div class="c n" style="left:275px;top:1029px;width:63px;height:23px;background:#d3e4f5"><span class="L">۳,<span class="z">۰</span>۵۸</span></div>
<div class="c n" style="left:197px;top:1029px;width:77px;height:23px;background:#fde19e"><span class="L">۱۵۶,۹۶۵</span></div>
<div class="c n" style="left:108px;top:1029px;width:88px;height:23px;background:#d3e4f5"><span class="L">۴۸<span class="z">۰</span></span></div>
<div class="c" style="left:36px;top:1029px;width:71px;height:23px;background:#d3e4f5;text-align:right;padding-right:2px;font-size:11.5px;font-weight:bold">تولید</div>
<div class="c" style="left:1772px;top:1053px;width:112px;height:23px;background:#efefef;text-align:right;padding-right:3px;line-height:16.5px;padding-top:3px;font-size:11.3px">شير سرمخزن <span class="ser">CNG</span></div>
<div class="c" style="left:1729px;top:1053px;width:42px;height:23px;background:#efefef;text-align:right;padding-right:2px;font-size:11px;-webkit-text-stroke:0.3px currentColor">مجموعه</div>
<div class="c n" style="left:1666px;top:1053px;width:62px;height:23px;background:#efefef"><span class="L">۹<span class="z">۰</span>۶</span></div>
<div class="c n" style="left:1605px;top:1053px;width:60px;height:23px;background:#efefef"><span class="L">۹۱<span class="z">۰</span></span></div>
<div class="c n" style="left:1528px;top:1053px;width:76px;height:23px;background:#fde19e"><span class="L">۳۸,۹۱<span class="z">۰</span>,۹۸۹</span></div>
<div class="c n" style="left:1433px;top:1053px;width:94px;height:23px;background:#efefef"><span class="L">۳۵,۴<span class="z">۰</span>۹</span></div>
<div class="c n" style="left:1390px;top:1053px;width:42px;height:23px;background:#efefef"></div>
<div class="c n" style="left:1343px;top:1053px;width:46px;height:23px;background:#efefef"></div>
<div class="c n" style="left:1254px;top:1053px;width:88px;height:23px;background:#efefef"><span class="red"><span class="L">(۱)</span></span></div>
<div class="c n" style="left:1193px;top:1053px;width:60px;height:23px;background:#fde19e"><span class="L">۹<span class="z">۰</span>۶</span></div>
<div class="c n" style="left:1132px;top:1053px;width:60px;height:23px;background:#fde19e"><span class="L">۹۱<span class="z">۰</span></span></div>
<div class="c n" style="left:1055px;top:1053px;width:76px;height:23px;background:#fde19e"><span class="L">۳۸,۹<span class="z">۰</span>۹,۸۹<span class="z">۰</span></span></div>
<div class="c n" style="left:964px;top:1053px;width:90px;height:23px;background:#fde19e"><span class="L">۳۵,۴<span class="z">۰</span>۸</span></div>
<div class="c n" style="left:911px;top:1053px;width:52px;height:23px;background:#efefef"><span class="L">۹۳۳</span></div>
<div class="c n" style="left:854px;top:1053px;width:56px;height:23px;background:#efefef"><span class="L">۹۳۳</span></div>
<div class="c n" style="left:777px;top:1053px;width:76px;height:23px;background:#fde19e"><span class="L">۳۸,۵<span class="z">۰</span><span class="z">۰</span>,۵۳۶</span></div>
<div class="c n" style="left:689px;top:1053px;width:87px;height:23px;background:#efefef"><span class="L">۳۵,۹۲۱</span></div>
<div class="c n" style="left:629px;top:1053px;width:59px;height:23px;background:#fde19e"><span class="L">۱,۸۳۹</span></div>
<div class="c n" style="left:569px;top:1053px;width:59px;height:23px;background:#fde19e"><span class="L">۱,۸۴۳</span></div>
<div class="c n" style="left:491px;top:1053px;width:77px;height:23px;background:#fde19e"><span class="L">۳۸,۷<span class="z">۰</span>۲,۶۵۹</span></div>
<div class="c n" style="left:399px;top:1053px;width:91px;height:23px;background:#fde19e"><span class="L">۷۱,۳۲۹</span></div>
<div class="c n" style="left:339px;top:1053px;width:59px;height:23px;background:#efefef"></div>
<div class="c n" style="left:275px;top:1053px;width:63px;height:23px;background:#efefef"></div>
<div class="c n" style="left:197px;top:1053px;width:77px;height:23px;background:#fde19e"><span class="L"><span class="z">۰</span></span></div>
<div class="c n" style="left:108px;top:1053px;width:88px;height:23px;background:#efefef"><span class="L"><span class="z">۰</span></span></div>
<div class="c" style="left:36px;top:1053px;width:71px;height:23px;background:#efefef;text-align:right;padding-right:2px;font-size:11.5px;font-weight:bold">تولید</div>
<div class="a" style="left:36px;top:1077px;width:71px;height:10px;background:#fde19e"></div>
<div class="a" style="left:108px;top:1077px;width:88px;height:10px;background:#fde19e"></div>
<div class="a" style="left:197px;top:1077px;width:77px;height:10px;background:#fde19e"></div>
<div class="a" style="left:275px;top:1077px;width:63px;height:10px;background:#fde19e"></div>
<div class="a" style="left:339px;top:1077px;width:59px;height:10px;background:#fde19e"></div>
<div class="a" style="left:399px;top:1077px;width:91px;height:10px;background:#fde19e"></div>
<div class="a" style="left:491px;top:1077px;width:77px;height:10px;background:#fde19e"></div>
<div class="a" style="left:569px;top:1077px;width:59px;height:10px;background:#fde19e"></div>
<div class="a" style="left:629px;top:1077px;width:59px;height:10px;background:#fde19e"></div>
<div class="a" style="left:689px;top:1077px;width:87px;height:10px;background:#fde19e"></div>
<div class="a" style="left:777px;top:1077px;width:76px;height:10px;background:#fde19e"></div>
<div class="a" style="left:854px;top:1077px;width:56px;height:10px;background:#fde19e"></div>
<div class="a" style="left:911px;top:1077px;width:52px;height:10px;background:#fde19e"></div>
<div class="a" style="left:964px;top:1077px;width:90px;height:10px;background:#fde19e"></div>
<div class="a" style="left:1055px;top:1077px;width:76px;height:10px;background:#fde19e"></div>
<div class="a" style="left:1132px;top:1077px;width:60px;height:10px;background:#fde19e"></div>
<div class="a" style="left:1193px;top:1077px;width:60px;height:10px;background:#fde19e"></div>
<div class="a" style="left:1254px;top:1077px;width:88px;height:10px;background:#fde19e"></div>
<div class="a" style="left:1343px;top:1077px;width:46px;height:10px;background:#fde19e"></div>
<div class="a" style="left:1390px;top:1077px;width:42px;height:10px;background:#fde19e"></div>
<div class="a" style="left:1433px;top:1077px;width:94px;height:10px;background:#fde19e"></div>
<div class="a" style="left:1528px;top:1077px;width:76px;height:10px;background:#fde19e"></div>
<div class="a" style="left:1605px;top:1077px;width:60px;height:10px;background:#fde19e"></div>
<div class="a" style="left:1666px;top:1077px;width:62px;height:10px;background:#fde19e"></div>
<div class="a" style="left:1729px;top:1077px;width:42px;height:10px;background:#fde19e"></div>
<div class="a" style="left:1772px;top:1077px;width:112px;height:10px;background:#fde19e"></div>
<div class="a" style="left:555px;top:484px;width:800px;height:120px;transform:rotate(-46deg);font-size:101px;line-height:120px;font-weight:bold;color:rgba(90,90,90,0.10);text-align:center;white-space:nowrap;font-family:'Liberation Sans',sans-serif">@codal360.ir</div>
</body></html>
